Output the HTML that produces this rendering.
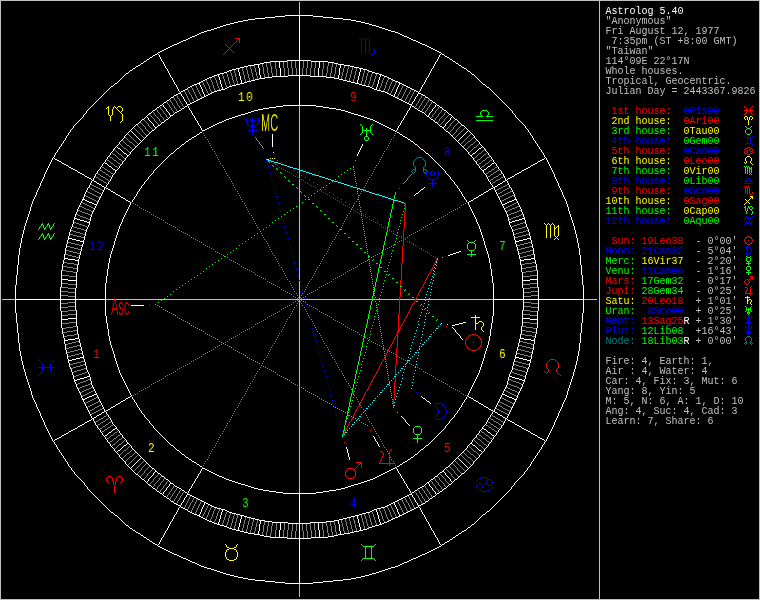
<!DOCTYPE html><html><head><meta charset="utf-8"><title>Astrolog 5.40</title><style>
html,body{margin:0;padding:0;background:#000;overflow:hidden}
#c{position:relative;width:760px;height:600px;background:#000;overflow:hidden}
svg{position:absolute;left:0;top:0}
.t{position:absolute;left:0;top:0;font-family:"Liberation Mono",monospace;font-size:10px;line-height:10px;white-space:pre;color:#c0c0c0;will-change:transform}
.t span{position:absolute;display:block;height:10px}
.hn{position:absolute;font-family:"Liberation Mono",monospace;font-size:13px;line-height:13px;letter-spacing:1.6px;white-space:pre;will-change:transform;transform:translateX(-50%) scaleX(0.85)}
.ob{position:absolute;font-family:"Liberation Sans",sans-serif;font-size:24px;line-height:24px;white-space:pre;transform-origin:0 0;transform:scaleX(0.46);will-change:transform;opacity:0.85}
.black{color:#000000}
.maroon{color:#800000}
.dkgreen{color:#008000}
.orange{color:#808000}
.dkblue{color:#000080}
.purple{color:#800080}
.dkcyan{color:#008080}
.ltgray{color:#c0c0c0}
.gray{color:#808080}
.red{color:#ff0000}
.green{color:#00ff00}
.yellow{color:#ffff00}
.blue{color:#0000ff}
.magenta{color:#ff00ff}
.cyan{color:#00ffff}
.white{color:#ffffff}
</style></head><body><div id="c">
<svg width="760" height="600" viewBox="0 0 760 600" shape-rendering="crispEdges" fill="none" stroke-width="1">
<path stroke="#008080" transform="translate(0,0.5)" d="M417 157h5M416 158h1M422 158h1M415 159h1M423 159h1M414 160h1M424 160h1M413 161h1M425 161h1M413 162h1M425 162h1M413 163h1M425 163h1M413 164h1M425 164h1M413 165h1M425 165h1M414 166h1M424 166h1M415 167h1M423 167h1M415 168h1M423 168h1M413 169h3M423 169h3M412 170h1M415 170h1M423 170h1M426 170h1M411 171h1M415 171h1M423 171h1M427 171h1M412 172h1M414 172h1M424 172h1M413 173h1M425 173h1M399 188h1M747 336h3M746 337h1M750 337h1M745 338h1M751 338h1M745 339h1M751 339h1M745 340h1M751 340h1M746 341h1M750 341h1M745 342h2M750 342h2M744 343h1M746 343h1M750 343h1M752 343h1M745 344h1M751 344h1"/>
<path stroke="#c0c0c0" transform="translate(0,0.5)" d="M0 0h760M0 1h1M599 1h1M759 1h1M0 2h1M299 2h1M599 2h1M759 2h1M0 3h1M299 3h1M599 3h1M759 3h1M0 4h1M299 4h1M599 4h1M759 4h1M0 5h1M299 5h1M599 5h1M759 5h1M0 6h1M299 6h1M599 6h1M759 6h1M0 7h1M299 7h1M599 7h1M759 7h1M0 8h1M299 8h1M599 8h1M759 8h1M0 9h1M299 9h1M599 9h1M759 9h1M0 10h1M299 10h1M599 10h1M759 10h1M0 11h1M299 11h1M599 11h1M759 11h1M0 12h1M299 12h1M599 12h1M759 12h1M0 13h1M299 13h1M599 13h1M759 13h1M0 14h1M299 14h1M599 14h1M759 14h1M0 15h1M599 15h1M759 15h1M0 16h1M599 16h1M759 16h1M0 17h1M599 17h1M759 17h1M0 18h1M599 18h1M759 18h1M0 19h1M599 19h1M759 19h1M0 20h1M599 20h1M759 20h1M0 21h1M599 21h1M759 21h1M0 22h1M599 22h1M759 22h1M0 23h1M599 23h1M759 23h1M0 24h1M599 24h1M759 24h1M0 25h1M599 25h1M759 25h1M0 26h1M599 26h1M759 26h1M0 27h1M599 27h1M759 27h1M0 28h1M599 28h1M759 28h1M0 29h1M599 29h1M759 29h1M0 30h1M599 30h1M759 30h1M0 31h1M599 31h1M759 31h1M0 32h1M599 32h1M759 32h1M0 33h1M599 33h1M759 33h1M0 34h1M599 34h1M759 34h1M0 35h1M599 35h1M759 35h1M0 36h1M599 36h1M759 36h1M0 37h1M599 37h1M759 37h1M0 38h1M599 38h1M759 38h1M0 39h1M599 39h1M759 39h1M0 40h1M599 40h1M759 40h1M0 41h1M599 41h1M759 41h1M0 42h1M599 42h1M759 42h1M0 43h1M599 43h1M759 43h1M0 44h1M599 44h1M759 44h1M0 45h1M599 45h1M759 45h1M0 46h1M599 46h1M759 46h1M0 47h1M599 47h1M759 47h1M0 48h1M599 48h1M759 48h1M0 49h1M599 49h1M759 49h1M0 50h1M599 50h1M759 50h1M0 51h1M599 51h1M759 51h1M0 52h1M599 52h1M759 52h1M0 53h1M599 53h1M759 53h1M0 54h1M599 54h1M759 54h1M0 55h1M599 55h1M759 55h1M0 56h1M599 56h1M759 56h1M0 57h1M599 57h1M759 57h1M0 58h1M599 58h1M759 58h1M0 59h1M599 59h1M759 59h1M0 60h1M599 60h1M759 60h1M0 61h1M599 61h1M759 61h1M0 62h1M599 62h1M759 62h1M0 63h1M599 63h1M759 63h1M0 64h1M599 64h1M759 64h1M0 65h1M599 65h1M759 65h1M0 66h1M599 66h1M759 66h1M0 67h1M599 67h1M759 67h1M0 68h1M599 68h1M759 68h1M0 69h1M599 69h1M759 69h1M0 70h1M599 70h1M759 70h1M0 71h1M599 71h1M759 71h1M0 72h1M599 72h1M759 72h1M0 73h1M599 73h1M759 73h1M0 74h1M599 74h1M759 74h1M0 75h1M599 75h1M759 75h1M0 76h1M599 76h1M759 76h1M0 77h1M599 77h1M759 77h1M0 78h1M599 78h1M759 78h1M0 79h1M599 79h1M759 79h1M0 80h1M599 80h1M759 80h1M0 81h1M599 81h1M759 81h1M0 82h1M599 82h1M759 82h1M0 83h1M599 83h1M759 83h1M0 84h1M599 84h1M759 84h1M0 85h1M599 85h1M759 85h1M0 86h1M599 86h1M759 86h1M0 87h1M599 87h1M759 87h1M0 88h1M599 88h1M759 88h1M0 89h1M599 89h1M759 89h1M0 90h1M599 90h1M759 90h1M0 91h1M599 91h1M759 91h1M0 92h1M599 92h1M759 92h1M0 93h1M599 93h1M759 93h1M0 94h1M599 94h1M759 94h1M0 95h1M599 95h1M759 95h1M0 96h1M599 96h1M759 96h1M0 97h1M599 97h1M759 97h1M0 98h1M599 98h1M759 98h1M0 99h1M599 99h1M759 99h1M0 100h1M599 100h1M759 100h1M0 101h1M599 101h1M759 101h1M0 102h1M599 102h1M759 102h1M0 103h1M599 103h1M759 103h1M0 104h1M599 104h1M759 104h1M0 105h1M599 105h1M759 105h1M0 106h1M299 106h1M599 106h1M759 106h1M0 107h1M299 107h1M599 107h1M759 107h1M0 108h1M299 108h1M599 108h1M759 108h1M0 109h1M299 109h1M599 109h1M759 109h1M0 110h1M299 110h1M599 110h1M759 110h1M0 111h1M299 111h1M599 111h1M759 111h1M0 112h1M299 112h1M599 112h1M759 112h1M0 113h1M299 113h1M599 113h1M759 113h1M0 114h1M299 114h1M599 114h1M759 114h1M0 115h1M299 115h1M599 115h1M759 115h1M0 116h1M299 116h1M599 116h1M759 116h1M0 117h1M299 117h1M599 117h1M759 117h1M0 118h1M299 118h1M599 118h1M759 118h1M0 119h1M299 119h1M599 119h1M759 119h1M0 120h1M299 120h1M599 120h1M759 120h1M0 121h1M299 121h1M599 121h1M759 121h1M0 122h1M299 122h1M599 122h1M759 122h1M0 123h1M299 123h1M599 123h1M759 123h1M0 124h1M299 124h1M599 124h1M759 124h1M0 125h1M299 125h1M599 125h1M759 125h1M0 126h1M299 126h1M599 126h1M759 126h1M0 127h1M299 127h1M599 127h1M759 127h1M0 128h1M299 128h1M599 128h1M759 128h1M0 129h1M299 129h1M599 129h1M759 129h1M0 130h1M299 130h1M599 130h1M759 130h1M0 131h1M299 131h1M599 131h1M759 131h1M0 132h1M299 132h1M599 132h1M759 132h1M0 133h1M299 133h1M599 133h1M759 133h1M0 134h1M299 134h1M599 134h1M759 134h1M0 135h1M299 135h1M599 135h1M759 135h1M0 136h1M299 136h1M599 136h1M759 136h1M0 137h1M299 137h1M599 137h1M759 137h1M0 138h1M299 138h1M599 138h1M759 138h1M0 139h1M299 139h1M599 139h1M759 139h1M0 140h1M299 140h1M599 140h1M759 140h1M0 141h1M299 141h1M599 141h1M759 141h1M0 142h1M299 142h1M599 142h1M759 142h1M0 143h1M299 143h1M599 143h1M759 143h1M0 144h1M299 144h1M599 144h1M759 144h1M0 145h1M299 145h1M599 145h1M759 145h1M0 146h1M299 146h1M599 146h1M759 146h1M0 147h1M299 147h1M599 147h1M759 147h1M0 148h1M299 148h1M599 148h1M759 148h1M0 149h1M299 149h1M599 149h1M759 149h1M0 150h1M299 150h1M599 150h1M759 150h1M0 151h1M299 151h1M599 151h1M759 151h1M0 152h1M299 152h1M599 152h1M759 152h1M0 153h1M299 153h1M599 153h1M759 153h1M0 154h1M299 154h1M599 154h1M759 154h1M0 155h1M299 155h1M599 155h1M759 155h1M0 156h1M299 156h1M599 156h1M759 156h1M0 157h1M299 157h1M599 157h1M759 157h1M0 158h1M299 158h1M599 158h1M759 158h1M0 159h1M299 159h1M599 159h1M759 159h1M0 160h1M299 160h1M599 160h1M759 160h1M0 161h1M299 161h1M599 161h1M759 161h1M0 162h1M299 162h1M599 162h1M759 162h1M0 163h1M299 163h1M599 163h1M759 163h1M0 164h1M299 164h1M599 164h1M759 164h1M0 165h1M299 165h1M599 165h1M759 165h1M0 166h1M299 166h1M599 166h1M759 166h1M0 167h1M299 167h1M599 167h1M759 167h1M0 168h1M299 168h1M599 168h1M759 168h1M0 169h1M599 169h1M759 169h1M0 170h1M299 170h1M599 170h1M759 170h1M0 171h1M299 171h1M599 171h1M759 171h1M0 172h1M299 172h1M599 172h1M759 172h1M0 173h1M299 173h1M599 173h1M759 173h1M0 174h1M299 174h1M599 174h1M759 174h1M0 175h1M299 175h1M599 175h1M759 175h1M0 176h1M299 176h1M599 176h1M759 176h1M0 177h1M299 177h1M599 177h1M759 177h1M0 178h1M599 178h1M759 178h1M0 179h1M299 179h1M599 179h1M759 179h1M0 180h1M299 180h1M599 180h1M759 180h1M0 181h1M299 181h1M599 181h1M759 181h1M0 182h1M299 182h1M599 182h1M759 182h1M0 183h1M299 183h1M599 183h1M759 183h1M0 184h1M299 184h1M599 184h1M759 184h1M0 185h1M299 185h1M599 185h1M759 185h1M0 186h1M299 186h1M599 186h1M759 186h1M0 187h1M299 187h1M599 187h1M759 187h1M0 188h1M299 188h1M599 188h1M759 188h1M0 189h1M299 189h1M599 189h1M759 189h1M0 190h1M299 190h1M599 190h1M759 190h1M0 191h1M299 191h1M599 191h1M759 191h1M0 192h1M299 192h1M599 192h1M759 192h1M0 193h1M299 193h1M599 193h1M759 193h1M0 194h1M299 194h1M599 194h1M759 194h1M0 195h1M299 195h1M599 195h1M759 195h1M0 196h1M299 196h1M599 196h1M759 196h1M0 197h1M299 197h1M599 197h1M759 197h1M0 198h1M299 198h1M599 198h1M759 198h1M0 199h1M299 199h1M599 199h1M759 199h1M0 200h1M299 200h1M599 200h1M759 200h1M0 201h1M299 201h1M599 201h1M759 201h1M0 202h1M299 202h1M599 202h1M759 202h1M0 203h1M299 203h1M599 203h1M759 203h1M0 204h1M599 204h1M759 204h1M0 205h1M299 205h1M599 205h1M759 205h1M0 206h1M299 206h1M599 206h1M759 206h1M0 207h1M299 207h1M599 207h1M759 207h1M0 208h1M299 208h1M599 208h1M759 208h1M0 209h1M299 209h1M599 209h1M759 209h1M0 210h1M299 210h1M599 210h1M759 210h1M0 211h1M299 211h1M599 211h1M759 211h1M0 212h1M299 212h1M599 212h1M759 212h1M0 213h1M299 213h1M599 213h1M759 213h1M0 214h1M299 214h1M599 214h1M759 214h1M0 215h1M299 215h1M599 215h1M759 215h1M0 216h1M299 216h1M599 216h1M759 216h1M0 217h1M299 217h1M599 217h1M759 217h1M0 218h1M299 218h1M599 218h1M759 218h1M0 219h1M299 219h1M599 219h1M759 219h1M0 220h1M299 220h1M599 220h1M759 220h1M0 221h1M299 221h1M599 221h1M759 221h1M0 222h1M299 222h1M599 222h1M759 222h1M0 223h1M299 223h1M599 223h1M759 223h1M0 224h1M299 224h1M599 224h1M759 224h1M0 225h1M299 225h1M599 225h1M759 225h1M0 226h1M299 226h1M599 226h1M759 226h1M0 227h1M299 227h1M599 227h1M759 227h1M0 228h1M299 228h1M599 228h1M759 228h1M0 229h1M299 229h1M599 229h1M759 229h1M0 230h1M299 230h1M599 230h1M759 230h1M0 231h1M299 231h1M599 231h1M759 231h1M0 232h1M299 232h1M599 232h1M759 232h1M0 233h1M299 233h1M599 233h1M759 233h1M0 234h1M299 234h1M599 234h1M759 234h1M0 235h1M299 235h1M599 235h1M759 235h1M0 236h1M299 236h1M599 236h1M759 236h1M0 237h1M299 237h1M599 237h1M759 237h1M0 238h1M299 238h1M599 238h1M759 238h1M0 239h1M299 239h1M599 239h1M759 239h1M0 240h1M299 240h1M599 240h1M759 240h1M0 241h1M299 241h1M599 241h1M759 241h1M0 242h1M299 242h1M599 242h1M759 242h1M0 243h1M299 243h1M599 243h1M759 243h1M0 244h1M299 244h1M599 244h1M759 244h1M0 245h1M299 245h1M599 245h1M759 245h1M0 246h1M299 246h1M599 246h1M759 246h1M0 247h1M299 247h1M599 247h1M759 247h1M0 248h1M299 248h1M599 248h1M759 248h1M0 249h1M299 249h1M599 249h1M759 249h1M0 250h1M299 250h1M599 250h1M759 250h1M0 251h1M299 251h1M599 251h1M759 251h1M0 252h1M299 252h1M599 252h1M759 252h1M0 253h1M299 253h1M599 253h1M759 253h1M0 254h1M299 254h1M599 254h1M759 254h1M0 255h1M299 255h1M599 255h1M759 255h1M0 256h1M299 256h1M599 256h1M759 256h1M0 257h1M299 257h1M599 257h1M759 257h1M0 258h1M299 258h1M599 258h1M759 258h1M0 259h1M299 259h1M599 259h1M759 259h1M0 260h1M299 260h1M599 260h1M759 260h1M0 261h1M299 261h1M599 261h1M759 261h1M0 262h1M299 262h1M599 262h1M759 262h1M0 263h1M299 263h1M599 263h1M759 263h1M0 264h1M299 264h1M599 264h1M759 264h1M0 265h1M299 265h1M599 265h1M759 265h1M0 266h1M299 266h1M599 266h1M759 266h1M0 267h1M299 267h1M599 267h1M759 267h1M0 268h1M299 268h1M599 268h1M759 268h1M0 269h1M299 269h1M599 269h1M759 269h1M0 270h1M299 270h1M599 270h1M759 270h1M0 271h1M299 271h1M599 271h1M759 271h1M0 272h1M299 272h1M599 272h1M759 272h1M0 273h1M299 273h1M599 273h1M759 273h1M0 274h1M299 274h1M599 274h1M759 274h1M0 275h1M299 275h1M599 275h1M759 275h1M0 276h1M299 276h1M599 276h1M759 276h1M0 277h1M299 277h1M599 277h1M759 277h1M0 278h1M299 278h1M599 278h1M759 278h1M0 279h1M299 279h1M599 279h1M759 279h1M0 280h1M599 280h1M759 280h1M0 281h1M299 281h1M599 281h1M759 281h1M0 282h1M299 282h1M599 282h1M759 282h1M0 283h1M299 283h1M599 283h1M759 283h1M0 284h1M299 284h1M599 284h1M759 284h1M0 285h1M299 285h1M599 285h1M759 285h1M0 286h1M299 286h1M599 286h1M759 286h1M0 287h1M299 287h1M599 287h1M759 287h1M0 288h1M299 288h1M599 288h1M759 288h1M0 289h1M299 289h1M599 289h1M759 289h1M0 290h1M299 290h1M599 290h1M759 290h1M0 291h1M299 291h1M599 291h1M759 291h1M0 292h1M299 292h1M599 292h1M759 292h1M0 293h1M299 293h1M599 293h1M759 293h1M0 294h1M299 294h1M599 294h1M759 294h1M0 295h1M299 295h1M599 295h1M759 295h1M0 296h1M299 296h1M599 296h1M759 296h1M0 297h1M299 297h1M599 297h1M759 297h1M0 298h1M299 298h1M599 298h1M759 298h1M0 299h1M2 299h13M106 299h193M300 299h72M373 299h2M376 299h23M400 299h15M416 299h77M584 299h13M599 299h1M759 299h1M0 300h1M299 300h1M599 300h1M759 300h1M0 301h1M299 301h1M599 301h1M759 301h1M0 302h1M299 302h1M599 302h1M759 302h1M0 303h1M299 303h1M599 303h1M759 303h1M0 304h1M299 304h1M599 304h1M759 304h1M0 305h1M299 305h1M599 305h1M759 305h1M0 306h1M299 306h1M599 306h1M759 306h1M0 307h1M299 307h1M599 307h1M759 307h1M0 308h1M299 308h1M599 308h1M759 308h1M0 309h1M299 309h1M599 309h1M759 309h1M0 310h1M299 310h1M599 310h1M759 310h1M0 311h1M299 311h1M599 311h1M759 311h1M0 312h1M299 312h1M599 312h1M759 312h1M0 313h1M299 313h1M599 313h1M759 313h1M0 314h1M299 314h1M599 314h1M759 314h1M0 315h1M299 315h1M599 315h1M759 315h1M0 316h1M299 316h1M599 316h1M759 316h1M0 317h1M299 317h1M599 317h1M759 317h1M0 318h1M299 318h1M599 318h1M759 318h1M0 319h1M299 319h1M599 319h1M759 319h1M0 320h1M299 320h1M599 320h1M759 320h1M0 321h1M299 321h1M599 321h1M759 321h1M0 322h1M299 322h1M599 322h1M759 322h1M0 323h1M299 323h1M599 323h1M759 323h1M0 324h1M299 324h1M599 324h1M759 324h1M0 325h1M299 325h1M599 325h1M759 325h1M0 326h1M299 326h1M599 326h1M759 326h1M0 327h1M299 327h1M599 327h1M759 327h1M0 328h1M299 328h1M599 328h1M759 328h1M0 329h1M299 329h1M599 329h1M759 329h1M0 330h1M299 330h1M599 330h1M759 330h1M0 331h1M299 331h1M599 331h1M759 331h1M0 332h1M299 332h1M599 332h1M759 332h1M0 333h1M299 333h1M599 333h1M759 333h1M0 334h1M299 334h1M599 334h1M759 334h1M0 335h1M299 335h1M599 335h1M759 335h1M0 336h1M299 336h1M599 336h1M759 336h1M0 337h1M299 337h1M599 337h1M759 337h1M0 338h1M299 338h1M599 338h1M759 338h1M0 339h1M299 339h1M599 339h1M759 339h1M0 340h1M299 340h1M599 340h1M759 340h1M0 341h1M299 341h1M599 341h1M759 341h1M0 342h1M299 342h1M599 342h1M759 342h1M0 343h1M299 343h1M599 343h1M759 343h1M0 344h1M299 344h1M599 344h1M759 344h1M0 345h1M299 345h1M599 345h1M759 345h1M0 346h1M299 346h1M599 346h1M759 346h1M0 347h1M299 347h1M599 347h1M759 347h1M0 348h1M299 348h1M599 348h1M759 348h1M0 349h1M299 349h1M599 349h1M759 349h1M0 350h1M299 350h1M599 350h1M759 350h1M0 351h1M299 351h1M599 351h1M759 351h1M0 352h1M299 352h1M599 352h1M759 352h1M0 353h1M299 353h1M599 353h1M759 353h1M0 354h1M299 354h1M599 354h1M759 354h1M0 355h1M299 355h1M599 355h1M759 355h1M0 356h1M299 356h1M599 356h1M759 356h1M0 357h1M299 357h1M599 357h1M759 357h1M0 358h1M299 358h1M599 358h1M759 358h1M0 359h1M299 359h1M599 359h1M759 359h1M0 360h1M299 360h1M599 360h1M759 360h1M0 361h1M299 361h1M599 361h1M759 361h1M0 362h1M299 362h1M599 362h1M759 362h1M0 363h1M299 363h1M599 363h1M759 363h1M0 364h1M299 364h1M599 364h1M759 364h1M0 365h1M299 365h1M599 365h1M759 365h1M0 366h1M299 366h1M599 366h1M759 366h1M0 367h1M299 367h1M599 367h1M759 367h1M0 368h1M299 368h1M599 368h1M759 368h1M0 369h1M299 369h1M599 369h1M759 369h1M0 370h1M299 370h1M599 370h1M759 370h1M0 371h1M299 371h1M599 371h1M759 371h1M0 372h1M299 372h1M599 372h1M759 372h1M0 373h1M299 373h1M599 373h1M759 373h1M0 374h1M299 374h1M599 374h1M759 374h1M0 375h1M299 375h1M599 375h1M759 375h1M0 376h1M299 376h1M599 376h1M759 376h1M0 377h1M299 377h1M599 377h1M759 377h1M0 378h1M299 378h1M599 378h1M759 378h1M0 379h1M299 379h1M599 379h1M759 379h1M0 380h1M299 380h1M599 380h1M759 380h1M0 381h1M299 381h1M599 381h1M759 381h1M0 382h1M299 382h1M599 382h1M759 382h1M0 383h1M299 383h1M599 383h1M759 383h1M0 384h1M299 384h1M599 384h1M759 384h1M0 385h1M299 385h1M599 385h1M759 385h1M0 386h1M599 386h1M759 386h1M0 387h1M299 387h1M599 387h1M759 387h1M0 388h1M299 388h1M599 388h1M759 388h1M0 389h1M299 389h1M599 389h1M759 389h1M0 390h1M299 390h1M599 390h1M759 390h1M0 391h1M299 391h1M599 391h1M759 391h1M0 392h1M299 392h1M599 392h1M759 392h1M0 393h1M299 393h1M599 393h1M759 393h1M0 394h1M299 394h1M599 394h1M759 394h1M0 395h1M299 395h1M599 395h1M759 395h1M0 396h1M299 396h1M599 396h1M759 396h1M0 397h1M299 397h1M599 397h1M759 397h1M0 398h1M299 398h1M599 398h1M759 398h1M0 399h1M299 399h1M599 399h1M759 399h1M0 400h1M299 400h1M599 400h1M759 400h1M0 401h1M299 401h1M599 401h1M759 401h1M0 402h1M299 402h1M599 402h1M759 402h1M0 403h1M299 403h1M599 403h1M759 403h1M0 404h1M299 404h1M599 404h1M759 404h1M0 405h1M299 405h1M599 405h1M759 405h1M0 406h1M299 406h1M599 406h1M759 406h1M0 407h1M299 407h1M599 407h1M759 407h1M0 408h1M299 408h1M599 408h1M759 408h1M0 409h1M299 409h1M599 409h1M759 409h1M0 410h1M299 410h1M599 410h1M759 410h1M0 411h1M299 411h1M599 411h1M759 411h1M0 412h1M299 412h1M599 412h1M759 412h1M0 413h1M299 413h1M599 413h1M759 413h1M0 414h1M299 414h1M599 414h1M759 414h1M0 415h1M299 415h1M599 415h1M759 415h1M0 416h1M299 416h1M599 416h1M759 416h1M0 417h1M299 417h1M599 417h1M759 417h1M0 418h1M299 418h1M599 418h1M759 418h1M0 419h1M299 419h1M599 419h1M759 419h1M0 420h1M299 420h1M599 420h1M759 420h1M0 421h1M299 421h1M599 421h1M759 421h1M0 422h1M299 422h1M599 422h1M759 422h1M0 423h1M299 423h1M599 423h1M759 423h1M0 424h1M299 424h1M599 424h1M759 424h1M0 425h1M299 425h1M599 425h1M759 425h1M0 426h1M299 426h1M599 426h1M759 426h1M0 427h1M299 427h1M599 427h1M759 427h1M0 428h1M299 428h1M599 428h1M759 428h1M0 429h1M299 429h1M599 429h1M759 429h1M0 430h1M299 430h1M599 430h1M759 430h1M0 431h1M299 431h1M599 431h1M759 431h1M0 432h1M299 432h1M599 432h1M759 432h1M0 433h1M299 433h1M599 433h1M759 433h1M0 434h1M299 434h1M599 434h1M759 434h1M0 435h1M299 435h1M599 435h1M759 435h1M0 436h1M299 436h1M599 436h1M759 436h1M0 437h1M299 437h1M599 437h1M759 437h1M0 438h1M299 438h1M599 438h1M759 438h1M0 439h1M299 439h1M599 439h1M759 439h1M0 440h1M299 440h1M599 440h1M759 440h1M0 441h1M299 441h1M599 441h1M759 441h1M0 442h1M299 442h1M599 442h1M759 442h1M0 443h1M299 443h1M599 443h1M759 443h1M0 444h1M299 444h1M599 444h1M759 444h1M0 445h1M299 445h1M599 445h1M759 445h1M0 446h1M299 446h1M599 446h1M759 446h1M0 447h1M299 447h1M599 447h1M759 447h1M0 448h1M299 448h1M599 448h1M759 448h1M0 449h1M299 449h1M599 449h1M759 449h1M0 450h1M299 450h1M599 450h1M759 450h1M0 451h1M299 451h1M599 451h1M759 451h1M0 452h1M299 452h1M599 452h1M759 452h1M0 453h1M299 453h1M599 453h1M759 453h1M0 454h1M299 454h1M599 454h1M759 454h1M0 455h1M299 455h1M599 455h1M759 455h1M0 456h1M299 456h1M599 456h1M759 456h1M0 457h1M299 457h1M599 457h1M759 457h1M0 458h1M299 458h1M599 458h1M759 458h1M0 459h1M299 459h1M599 459h1M759 459h1M0 460h1M299 460h1M599 460h1M759 460h1M0 461h1M299 461h1M599 461h1M759 461h1M0 462h1M299 462h1M599 462h1M759 462h1M0 463h1M299 463h1M599 463h1M759 463h1M0 464h1M299 464h1M599 464h1M759 464h1M0 465h1M299 465h1M599 465h1M759 465h1M0 466h1M299 466h1M599 466h1M759 466h1M0 467h1M299 467h1M599 467h1M759 467h1M0 468h1M299 468h1M599 468h1M759 468h1M0 469h1M299 469h1M599 469h1M759 469h1M0 470h1M299 470h1M599 470h1M759 470h1M0 471h1M299 471h1M599 471h1M759 471h1M0 472h1M299 472h1M599 472h1M759 472h1M0 473h1M299 473h1M599 473h1M759 473h1M0 474h1M299 474h1M599 474h1M759 474h1M0 475h1M299 475h1M599 475h1M759 475h1M0 476h1M299 476h1M599 476h1M759 476h1M0 477h1M299 477h1M599 477h1M759 477h1M0 478h1M299 478h1M599 478h1M759 478h1M0 479h1M299 479h1M599 479h1M759 479h1M0 480h1M299 480h1M599 480h1M759 480h1M0 481h1M299 481h1M599 481h1M759 481h1M0 482h1M299 482h1M599 482h1M759 482h1M0 483h1M299 483h1M599 483h1M759 483h1M0 484h1M299 484h1M599 484h1M759 484h1M0 485h1M299 485h1M599 485h1M759 485h1M0 486h1M299 486h1M599 486h1M759 486h1M0 487h1M299 487h1M599 487h1M759 487h1M0 488h1M299 488h1M599 488h1M759 488h1M0 489h1M299 489h1M599 489h1M759 489h1M0 490h1M299 490h1M599 490h1M759 490h1M0 491h1M299 491h1M599 491h1M759 491h1M0 492h1M299 492h1M599 492h1M759 492h1M0 493h1M599 493h1M759 493h1M0 494h1M599 494h1M759 494h1M0 495h1M599 495h1M759 495h1M0 496h1M599 496h1M759 496h1M0 497h1M599 497h1M759 497h1M0 498h1M599 498h1M759 498h1M0 499h1M599 499h1M759 499h1M0 500h1M599 500h1M759 500h1M0 501h1M599 501h1M759 501h1M0 502h1M599 502h1M759 502h1M0 503h1M599 503h1M759 503h1M0 504h1M599 504h1M759 504h1M0 505h1M599 505h1M759 505h1M0 506h1M599 506h1M759 506h1M0 507h1M599 507h1M759 507h1M0 508h1M599 508h1M759 508h1M0 509h1M599 509h1M759 509h1M0 510h1M599 510h1M759 510h1M0 511h1M599 511h1M759 511h1M0 512h1M599 512h1M759 512h1M0 513h1M599 513h1M759 513h1M0 514h1M599 514h1M759 514h1M0 515h1M599 515h1M759 515h1M0 516h1M599 516h1M759 516h1M0 517h1M599 517h1M759 517h1M0 518h1M599 518h1M759 518h1M0 519h1M599 519h1M759 519h1M0 520h1M599 520h1M759 520h1M0 521h1M599 521h1M759 521h1M0 522h1M599 522h1M759 522h1M0 523h1M599 523h1M759 523h1M0 524h1M599 524h1M759 524h1M0 525h1M599 525h1M759 525h1M0 526h1M599 526h1M759 526h1M0 527h1M599 527h1M759 527h1M0 528h1M599 528h1M759 528h1M0 529h1M599 529h1M759 529h1M0 530h1M599 530h1M759 530h1M0 531h1M599 531h1M759 531h1M0 532h1M599 532h1M759 532h1M0 533h1M599 533h1M759 533h1M0 534h1M599 534h1M759 534h1M0 535h1M599 535h1M759 535h1M0 536h1M599 536h1M759 536h1M0 537h1M599 537h1M759 537h1M0 538h1M599 538h1M759 538h1M0 539h1M599 539h1M759 539h1M0 540h1M599 540h1M759 540h1M0 541h1M599 541h1M759 541h1M0 542h1M599 542h1M759 542h1M0 543h1M599 543h1M759 543h1M0 544h1M599 544h1M759 544h1M0 545h1M599 545h1M759 545h1M0 546h1M599 546h1M759 546h1M0 547h1M599 547h1M759 547h1M0 548h1M599 548h1M759 548h1M0 549h1M599 549h1M759 549h1M0 550h1M599 550h1M759 550h1M0 551h1M599 551h1M759 551h1M0 552h1M599 552h1M759 552h1M0 553h1M599 553h1M759 553h1M0 554h1M599 554h1M759 554h1M0 555h1M599 555h1M759 555h1M0 556h1M599 556h1M759 556h1M0 557h1M599 557h1M759 557h1M0 558h1M599 558h1M759 558h1M0 559h1M599 559h1M759 559h1M0 560h1M599 560h1M759 560h1M0 561h1M599 561h1M759 561h1M0 562h1M599 562h1M759 562h1M0 563h1M599 563h1M759 563h1M0 564h1M599 564h1M759 564h1M0 565h1M599 565h1M759 565h1M0 566h1M599 566h1M759 566h1M0 567h1M599 567h1M759 567h1M0 568h1M599 568h1M759 568h1M0 569h1M599 569h1M759 569h1M0 570h1M599 570h1M759 570h1M0 571h1M599 571h1M759 571h1M0 572h1M599 572h1M759 572h1M0 573h1M599 573h1M759 573h1M0 574h1M599 574h1M759 574h1M0 575h1M599 575h1M759 575h1M0 576h1M599 576h1M759 576h1M0 577h1M599 577h1M759 577h1M0 578h1M599 578h1M759 578h1M0 579h1M599 579h1M759 579h1M0 580h1M599 580h1M759 580h1M0 581h1M599 581h1M759 581h1M0 582h1M599 582h1M759 582h1M0 583h1M599 583h1M759 583h1M0 584h1M299 584h1M599 584h1M759 584h1M0 585h1M299 585h1M599 585h1M759 585h1M0 586h1M299 586h1M599 586h1M759 586h1M0 587h1M299 587h1M599 587h1M759 587h1M0 588h1M299 588h1M599 588h1M759 588h1M0 589h1M299 589h1M599 589h1M759 589h1M0 590h1M299 590h1M599 590h1M759 590h1M0 591h1M299 591h1M599 591h1M759 591h1M0 592h1M299 592h1M599 592h1M759 592h1M0 593h1M299 593h1M599 593h1M759 593h1M0 594h1M299 594h1M599 594h1M759 594h1M0 595h1M299 595h1M599 595h1M759 595h1M0 596h1M299 596h1M599 596h1M759 596h1M0 597h1M599 597h1M759 597h1M0 598h1M599 598h1M759 598h1M0 599h760"/>
<path stroke="#808080" transform="translate(0,0.5)" d="M287 61h1M291 61h1M295 61h1M303 61h1M307 61h1M270 62h1M275 62h1M283 62h1M287 62h1M291 62h1M295 62h1M303 62h1M307 62h1M311 62h1M315 62h1M323 62h1M266 63h1M270 63h1M275 63h1M283 63h1M287 63h1M291 63h1M295 63h1M303 63h1M307 63h1M311 63h1M315 63h1M323 63h1M328 63h1M332 63h1M262 64h1M266 64h1M270 64h1M275 64h1M283 64h1M287 64h1M291 64h1M295 64h1M303 64h1M307 64h1M311 64h1M315 64h1M323 64h1M328 64h1M332 64h1M336 64h1M254 65h1M262 65h1M266 65h1M270 65h1M275 65h1M283 65h1M287 65h1M291 65h1M295 65h1M303 65h1M307 65h1M311 65h1M315 65h1M323 65h1M328 65h1M332 65h1M336 65h1M250 66h1M254 66h1M262 66h1M266 66h1M271 66h1M275 66h1M283 66h1M287 66h1M291 66h1M295 66h1M303 66h1M307 66h1M311 66h1M315 66h1M323 66h1M327 66h1M332 66h1M336 66h1M344 66h1M348 66h1M246 67h1M250 67h1M254 67h1M263 67h1M267 67h1M271 67h1M275 67h1M283 67h1M287 67h1M291 67h1M295 67h1M303 67h1M307 67h1M311 67h1M315 67h1M323 67h1M327 67h1M331 67h1M335 67h1M344 67h1M348 67h1M352 67h1M242 68h1M246 68h1M250 68h1M255 68h1M263 68h1M267 68h1M271 68h1M275 68h1M284 68h1M288 68h1M292 68h1M296 68h1M302 68h1M306 68h1M310 68h1M314 68h1M323 68h1M327 68h1M331 68h1M335 68h1M343 68h1M348 68h1M352 68h1M356 68h1M242 69h1M246 69h1M251 69h1M255 69h1M263 69h1M267 69h1M271 69h1M276 69h1M284 69h1M288 69h1M292 69h1M296 69h1M302 69h1M306 69h1M310 69h1M314 69h1M322 69h1M327 69h1M331 69h1M335 69h1M343 69h1M347 69h1M352 69h1M356 69h1M234 70h1M242 70h1M247 70h1M251 70h1M255 70h1M263 70h1M267 70h1M271 70h1M276 70h1M284 70h1M288 70h1M292 70h1M296 70h1M302 70h1M306 70h1M310 70h1M314 70h1M322 70h1M327 70h1M331 70h1M335 70h1M343 70h1M347 70h1M351 70h1M356 70h1M364 70h1M230 71h1M234 71h1M243 71h1M247 71h1M251 71h1M255 71h1M263 71h1M267 71h1M271 71h1M276 71h1M284 71h1M288 71h1M292 71h1M296 71h1M302 71h1M306 71h1M310 71h1M314 71h1M322 71h1M327 71h1M331 71h1M335 71h1M343 71h1M347 71h1M351 71h1M355 71h1M364 71h1M368 71h1M230 72h1M234 72h1M243 72h1M247 72h1M251 72h1M256 72h1M263 72h1M267 72h1M271 72h1M276 72h1M284 72h1M288 72h1M292 72h1M296 72h1M302 72h1M306 72h1M310 72h1M314 72h1M322 72h1M327 72h1M331 72h1M335 72h1M342 72h1M347 72h1M351 72h1M355 72h1M364 72h1M368 72h1M226 73h1M231 73h1M235 73h1M243 73h1M247 73h1M252 73h1M256 73h1M263 73h1M268 73h1M272 73h1M276 73h1M284 73h1M288 73h1M292 73h1M296 73h1M302 73h1M306 73h1M310 73h1M314 73h1M322 73h1M326 73h1M330 73h1M335 73h1M342 73h1M346 73h1M351 73h1M355 73h1M363 73h1M367 73h1M372 73h1M222 74h1M227 74h1M231 74h1M235 74h1M243 74h1M248 74h1M252 74h1M256 74h1M264 74h1M268 74h1M272 74h1M276 74h1M284 74h1M288 74h1M292 74h1M296 74h1M302 74h1M306 74h1M310 74h1M314 74h1M322 74h1M326 74h1M330 74h1M334 74h1M342 74h1M346 74h1M350 74h1M355 74h1M363 74h1M367 74h1M371 74h1M376 74h1M222 75h1M227 75h1M231 75h1M235 75h1M244 75h1M248 75h1M252 75h1M256 75h1M264 75h1M268 75h1M272 75h1M276 75h1M284 75h1M310 75h1M314 75h1M322 75h1M326 75h1M330 75h1M334 75h1M342 75h1M346 75h1M350 75h1M354 75h1M363 75h1M367 75h1M371 75h1M376 75h1M214 76h1M223 76h1M227 76h1M232 76h1M235 76h1M244 76h1M248 76h1M252 76h1M257 76h1M264 76h1M268 76h1M326 76h1M330 76h1M334 76h1M341 76h1M346 76h1M350 76h1M354 76h1M363 76h1M366 76h1M371 76h1M375 76h1M214 77h1M223 77h1M228 77h1M232 77h1M236 77h1M244 77h1M248 77h1M253 77h1M257 77h1M264 77h1M334 77h1M341 77h1M345 77h1M350 77h1M354 77h1M362 77h1M366 77h1M370 77h1M375 77h1M384 77h1M210 78h1M215 78h1M223 78h1M228 78h1M232 78h1M236 78h1M244 78h1M249 78h1M253 78h1M257 78h1M341 78h1M345 78h1M349 78h1M354 78h1M362 78h1M366 78h1M370 78h1M375 78h1M383 78h1M388 78h1M210 79h1M215 79h1M224 79h1M228 79h1M232 79h1M236 79h1M245 79h1M249 79h1M253 79h1M345 79h1M349 79h1M353 79h1M362 79h1M366 79h1M370 79h1M374 79h1M383 79h1M388 79h1M206 80h1M211 80h1M216 80h1M224 80h1M228 80h1M233 80h1M236 80h1M245 80h1M249 80h1M349 80h1M353 80h1M362 80h1M365 80h1M370 80h1M374 80h1M382 80h1M387 80h1M392 80h1M206 81h1M211 81h1M216 81h1M224 81h1M229 81h1M233 81h1M237 81h1M245 81h1M353 81h1M361 81h1M365 81h1M369 81h1M374 81h1M382 81h1M387 81h1M392 81h1M202 82h1M207 82h1M212 82h1M216 82h1M225 82h1M229 82h1M233 82h1M237 82h1M361 82h1M365 82h1M369 82h1M373 82h1M382 82h1M386 82h1M391 82h1M396 82h1M203 83h1M207 83h1M212 83h1M217 83h1M225 83h1M229 83h1M234 83h1M237 83h1M361 83h1M364 83h1M369 83h1M373 83h1M381 83h1M386 83h1M391 83h1M395 83h1M203 84h1M208 84h1M212 84h1M217 84h1M225 84h1M230 84h1M234 84h1M364 84h1M368 84h1M373 84h1M381 84h1M386 84h1M390 84h1M395 84h1M195 85h1M204 85h1M208 85h1M213 85h1M217 85h1M226 85h1M230 85h1M368 85h1M372 85h1M381 85h1M385 85h1M390 85h1M394 85h1M403 85h1M196 86h1M204 86h1M209 86h1M213 86h1M218 86h1M226 86h1M372 86h1M380 86h1M385 86h1M389 86h1M394 86h1M402 86h1M191 87h1M196 87h1M205 87h1M209 87h1M213 87h1M218 87h1M380 87h1M385 87h1M389 87h1M393 87h1M402 87h1M407 87h1M192 88h1M197 88h1M205 88h1M209 88h1M214 88h1M219 88h1M379 88h1M384 88h1M389 88h1M393 88h1M401 88h1M406 88h1M187 89h1M192 89h1M197 89h1M206 89h1M210 89h1M214 89h1M219 89h1M379 89h1M384 89h1M388 89h1M392 89h1M401 89h1M406 89h1M411 89h1M188 90h1M193 90h1M198 90h1M206 90h1M210 90h1M215 90h1M383 90h1M388 90h1M392 90h1M400 90h1M405 90h1M410 90h1M184 91h1M188 91h1M193 91h1M198 91h1M207 91h1M211 91h1M387 91h1M391 91h1M400 91h1M405 91h1M410 91h1M414 91h1M185 92h1M189 92h1M194 92h1M199 92h1M207 92h1M211 92h1M387 92h1M391 92h1M399 92h1M404 92h1M409 92h1M413 92h1M185 93h1M189 93h1M194 93h1M199 93h1M208 93h1M390 93h1M399 93h1M404 93h1M409 93h1M413 93h1M186 94h1M190 94h1M195 94h1M200 94h1M398 94h1M403 94h1M408 94h1M412 94h1M176 95h1M186 95h1M191 95h1M195 95h1M200 95h1M398 95h1M403 95h1M407 95h1M412 95h1M422 95h1M177 96h1M187 96h1M191 96h1M196 96h1M201 96h1M397 96h1M402 96h1M407 96h1M411 96h1M421 96h1M173 97h1M177 97h1M187 97h1M192 97h1M196 97h1M201 97h1M397 97h1M402 97h1M406 97h1M411 97h1M421 97h1M425 97h1M174 98h1M178 98h1M188 98h1M192 98h1M197 98h1M401 98h1M406 98h1M410 98h1M420 98h1M424 98h1M174 99h1M179 99h1M188 99h1M193 99h1M197 99h1M401 99h1M405 99h1M410 99h1M419 99h1M424 99h1M170 100h1M175 100h1M179 100h1M189 100h1M193 100h1M405 100h1M409 100h1M419 100h1M423 100h1M428 100h1M170 101h1M176 101h1M180 101h1M189 101h1M409 101h1M418 101h1M422 101h1M428 101h1M167 102h1M171 102h1M176 102h1M180 102h1M190 102h1M408 102h1M418 102h1M422 102h1M427 102h1M431 102h1M167 103h1M172 103h1M177 103h1M181 103h1M417 103h1M421 103h1M426 103h1M431 103h1M168 104h1M172 104h1M177 104h1M182 104h1M416 104h1M421 104h1M426 104h1M430 104h1M169 105h1M173 105h1M178 105h1M182 105h1M416 105h1M420 105h1M425 105h1M429 105h1M169 106h1M174 106h1M179 106h1M183 106h1M415 106h1M419 106h1M424 106h1M429 106h1M160 107h1M170 107h1M174 107h1M179 107h1M419 107h1M424 107h1M428 107h1M438 107h1M160 108h1M171 108h1M175 108h1M180 108h1M418 108h1M423 108h1M427 108h1M438 108h1M156 109h1M161 109h1M171 109h1M176 109h1M422 109h1M427 109h1M437 109h1M442 109h1M157 110h1M162 110h1M172 110h1M176 110h1M422 110h1M426 110h1M436 110h1M441 110h1M157 111h1M163 111h1M173 111h1M425 111h1M435 111h1M441 111h1M153 112h1M158 112h1M163 112h1M173 112h1M425 112h1M435 112h1M440 112h1M445 112h1M154 113h1M159 113h1M164 113h1M434 113h1M439 113h1M444 113h1M149 114h1M154 114h1M160 114h1M165 114h1M433 114h1M438 114h1M444 114h1M150 115h1M155 115h1M160 115h1M166 115h1M432 115h1M438 115h1M443 115h1M448 115h1M151 116h1M156 116h1M161 116h1M166 116h1M432 116h1M437 116h1M442 116h1M447 116h1M152 117h1M157 117h1M162 117h1M167 117h1M431 117h1M436 117h1M441 117h1M446 117h1M153 118h1M158 118h1M163 118h1M435 118h1M440 118h1M445 118h1M154 119h1M159 119h1M163 119h1M435 119h1M439 119h1M444 119h1M144 120h1M154 120h1M159 120h1M164 120h1M434 120h1M439 120h1M444 120h1M454 120h1M145 121h1M155 121h1M160 121h1M438 121h1M443 121h1M453 121h1M140 122h1M146 122h1M156 122h1M161 122h1M437 122h1M442 122h1M452 122h1M458 122h1M141 123h1M147 123h1M157 123h1M441 123h1M451 123h1M457 123h1M142 124h1M148 124h1M158 124h1M440 124h1M450 124h1M456 124h1M137 125h1M143 125h1M148 125h1M450 125h1M455 125h1M461 125h1M138 126h1M144 126h1M149 126h1M449 126h1M454 126h1M460 126h1M139 127h1M145 127h1M150 127h1M448 127h1M453 127h1M459 127h1M134 128h1M140 128h1M145 128h1M151 128h1M447 128h1M453 128h1M458 128h1M464 128h1M135 129h1M141 129h1M146 129h1M152 129h1M446 129h1M452 129h1M457 129h1M463 129h1M136 130h1M142 130h1M147 130h1M451 130h1M456 130h1M462 130h1M137 131h1M142 131h1M148 131h1M202 131h1M396 131h1M450 131h1M456 131h1M461 131h1M138 132h1M143 132h1M149 132h1M449 132h1M455 132h1M460 132h1M139 133h1M144 133h1M203 133h1M395 133h1M454 133h1M459 133h1M128 134h1M140 134h1M145 134h1M453 134h1M458 134h1M470 134h1M129 135h1M141 135h1M146 135h1M204 135h1M394 135h1M452 135h1M457 135h1M469 135h1M130 136h1M142 136h1M456 136h1M468 136h1M125 137h1M131 137h1M143 137h1M205 137h1M255 137h1M393 137h1M455 137h1M467 137h1M473 137h1M126 138h1M132 138h1M256 138h1M466 138h1M472 138h1M127 139h1M133 139h1M207 139h1M256 139h1M391 139h1M465 139h1M471 139h1M122 140h1M128 140h1M134 140h1M257 140h1M464 140h1M470 140h1M476 140h1M123 141h1M129 141h1M135 141h1M208 141h1M258 141h1M390 141h1M463 141h1M468 141h2M475 141h1M124 142h1M130 142h2M136 142h1M259 142h1M462 142h1M467 142h1M474 142h1M125 143h1M132 143h1M137 143h1M209 143h1M259 143h1M389 143h1M461 143h1M466 143h1M473 143h1M120 144h1M126 144h1M133 144h1M260 144h1M465 144h1M471 144h2M478 144h1M121 145h1M127 145h2M134 145h1M210 145h1M261 145h1M388 145h1M464 145h1M470 145h1M477 145h1M122 146h1M129 146h1M135 146h1M262 146h1M463 146h1M469 146h1M476 146h1M123 147h1M130 147h1M211 147h1M262 147h1M387 147h1M468 147h1M474 147h2M124 148h2M131 148h1M263 148h1M467 148h1M473 148h1M114 149h1M126 149h1M132 149h1M212 149h1M386 149h1M466 149h1M472 149h1M484 149h1M115 150h1M127 150h1M471 150h1M483 150h1M116 151h1M128 151h1M214 151h1M384 151h1M470 151h1M482 151h1M117 152h1M129 152h1M469 152h1M481 152h1M112 153h1M118 153h1M215 153h1M383 153h1M479 153h2M486 153h1M113 154h2M119 154h2M478 154h1M484 154h2M115 155h1M121 155h1M216 155h1M382 155h1M477 155h1M483 155h1M109 156h1M116 156h1M122 156h1M476 156h1M482 156h1M489 156h1M110 157h2M117 157h1M123 157h1M217 157h1M381 157h1M475 157h1M481 157h1M487 157h2M112 158h1M118 158h1M124 158h1M474 158h1M480 158h1M486 158h1M113 159h1M119 159h2M218 159h1M380 159h1M478 159h2M485 159h1M107 160h2M114 160h2M121 160h1M477 160h1M483 160h2M490 160h2M109 161h1M116 161h1M122 161h1M219 161h1M379 161h1M476 161h1M482 161h1M489 161h1M110 162h1M117 162h1M481 162h1M488 162h1M111 163h2M118 163h2M220 163h1M378 163h1M479 163h2M486 163h2M113 164h1M120 164h1M478 164h1M485 164h1M114 165h1M222 165h1M376 165h1M484 165h1M115 166h2M482 166h2M102 167h2M117 167h1M223 167h1M375 167h1M481 167h1M495 167h2M104 168h1M494 168h1M105 169h2M224 169h1M374 169h1M492 169h2M100 170h2M107 170h1M491 170h1M497 170h2M102 171h1M108 171h2M225 171h1M373 171h1M489 171h2M496 171h1M103 172h2M110 172h1M488 172h1M494 172h2M97 173h1M105 173h1M111 173h2M226 173h1M372 173h1M486 173h2M493 173h1M501 173h1M98 174h2M106 174h2M411 174h1M491 174h2M499 174h2M100 175h1M108 175h1M227 175h1M371 175h1M410 175h1M490 175h1M498 175h1M95 176h1M101 176h2M109 176h2M409 176h1M488 176h2M496 176h2M503 176h1M96 177h2M103 177h2M229 177h1M369 177h1M408 177h1M494 177h2M501 177h2M98 178h1M105 178h1M407 178h1M493 178h1M500 178h1M99 179h2M106 179h2M230 179h1M368 179h1M407 179h1M491 179h2M498 179h2M101 180h2M108 180h1M406 180h1M490 180h1M496 180h2M103 181h1M231 181h1M367 181h1M405 181h1M495 181h1M104 182h2M404 182h1M493 182h2M106 183h1M232 183h1M366 183h1M403 183h1M492 183h1M91 184h1M507 184h1M92 185h2M233 185h1M365 185h1M505 185h2M94 186h2M503 186h2M89 187h1M96 187h2M234 187h1M364 187h1M501 187h2M509 187h1M90 188h2M98 188h2M499 188h2M507 188h2M92 189h2M100 189h2M235 189h1M363 189h1M497 189h2M505 189h2M94 190h1M102 190h1M496 190h1M503 190h2M87 191h1M95 191h2M237 191h1M361 191h1M502 191h1M510 191h2M88 192h2M97 192h2M500 192h2M508 192h2M90 193h2M99 193h2M238 193h1M360 193h1M498 193h2M506 193h2M92 194h2M504 194h2M85 195h1M94 195h2M239 195h1M359 195h1M502 195h2M512 195h2M86 196h2M96 196h2M500 196h2M510 196h2M88 197h2M98 197h2M240 197h1M499 197h1M508 197h2M90 198h2M506 198h2M92 199h2M241 199h1M357 199h1M504 199h2M94 200h2M502 200h2M96 201h2M242 201h1M356 201h1M501 201h1M82 202h1M131 202h1M467 202h1M516 202h1M83 203h2M133 203h1M244 203h1M354 203h1M465 203h1M514 203h2M85 204h2M135 204h1M463 204h1M512 204h2M87 205h2M137 205h1M245 205h1M353 205h1M461 205h1M510 205h2M80 206h2M89 206h2M508 206h2M517 206h2M82 207h2M91 207h2M139 207h1M246 207h1M352 207h1M459 207h1M506 207h2M515 207h2M84 208h2M93 208h1M141 208h1M457 208h1M505 208h1M512 208h3M86 209h3M143 209h1M247 209h1M351 209h1M455 209h1M510 209h2M78 210h2M89 210h2M145 210h1M453 210h1M508 210h2M519 210h2M80 211h2M91 211h2M147 211h1M248 211h1M350 211h1M451 211h1M506 211h2M517 211h2M82 212h3M149 212h1M449 212h1M514 212h3M85 213h3M249 213h1M349 213h1M511 213h3M76 214h2M88 214h2M151 214h1M447 214h1M509 214h2M521 214h2M78 215h2M90 215h1M153 215h1M251 215h1M347 215h1M445 215h1M508 215h1M519 215h2M80 216h3M155 216h1M443 216h1M516 216h3M83 217h3M157 217h1M252 217h1M346 217h1M441 217h1M513 217h3M86 218h2M159 218h1M439 218h1M511 218h2M88 219h2M161 219h1M253 219h1M345 219h1M437 219h1M509 219h2M163 220h1M435 220h1M254 221h1M344 221h1M74 222h2M165 222h1M433 222h1M523 222h2M76 223h3M167 223h1M255 223h1M343 223h1M431 223h1M520 223h3M79 224h3M169 224h1M429 224h1M517 224h3M82 225h3M171 225h1M256 225h1M342 225h1M427 225h1M514 225h3M73 226h1M85 226h2M173 226h1M425 226h1M512 226h2M525 226h1M74 227h3M175 227h1M257 227h1M341 227h1M423 227h1M522 227h3M77 228h4M518 228h4M81 229h3M177 229h1M259 229h1M339 229h1M421 229h1M515 229h3M71 230h2M84 230h2M179 230h1M419 230h1M513 230h2M526 230h2M73 231h3M181 231h1M338 231h1M417 231h1M523 231h3M76 232h4M183 232h1M415 232h1M519 232h4M80 233h3M185 233h1M261 233h1M337 233h1M413 233h1M516 233h3M70 234h3M83 234h2M187 234h1M411 234h1M514 234h2M526 234h3M73 235h4M189 235h1M262 235h1M336 235h1M409 235h1M522 235h4M77 236h4M518 236h4M81 237h3M191 237h1M263 237h1M335 237h1M407 237h1M515 237h3M193 238h1M195 239h1M264 239h1M334 239h1M197 240h1M401 240h1M199 241h1M266 241h1M332 241h1M399 241h1M68 242h3M201 242h1M397 242h1M528 242h3M71 243h4M267 243h1M331 243h1M524 243h4M75 244h4M203 244h1M395 244h1M520 244h4M79 245h3M205 245h1M268 245h1M330 245h1M393 245h1M517 245h3M67 246h3M207 246h1M391 246h1M529 246h3M70 247h4M209 247h1M269 247h1M329 247h1M389 247h1M525 247h4M74 248h4M211 248h1M387 248h1M521 248h4M78 249h3M213 249h1M270 249h1M328 249h1M385 249h1M518 249h3M66 250h3M383 250h1M530 250h3M69 251h4M215 251h1M271 251h1M327 251h1M526 251h4M73 252h4M217 252h1M381 252h1M522 252h4M77 253h3M219 253h1M272 253h1M326 253h1M379 253h1M519 253h3M65 254h3M221 254h1M377 254h1M531 254h3M68 255h4M223 255h1M274 255h1M324 255h1M375 255h1M527 255h4M72 256h4M225 256h1M373 256h1M523 256h4M76 257h3M227 257h1M275 257h1M323 257h1M371 257h1M520 257h3M229 259h1M276 259h1M322 259h1M369 259h1M231 260h1M367 260h1M233 261h1M277 261h1M321 261h1M365 261h1M64 262h3M235 262h1M363 262h1M532 262h3M67 263h7M237 263h1M278 263h1M320 263h1M361 263h1M525 263h7M74 264h4M239 264h1M359 264h1M521 264h4M279 265h1M319 265h1M63 266h4M241 266h1M357 266h1M532 266h4M67 267h6M243 267h1M281 267h1M317 267h1M355 267h1M526 267h6M73 268h4M245 268h1M353 268h1M522 268h4M247 269h1M282 269h1M316 269h1M351 269h1M62 270h4M249 270h1M349 270h1M533 270h4M66 271h7M251 271h1M283 271h1M315 271h1M347 271h1M526 271h7M73 272h3M253 272h1M345 272h1M523 272h3M284 273h1M314 273h1M255 274h1M343 274h1M62 275h7M257 275h1M285 275h1M313 275h1M341 275h1M530 275h7M69 276h7M259 276h1M339 276h1M523 276h7M261 277h1M286 277h1M312 277h1M337 277h1M263 278h1M335 278h1M265 279h1M287 279h1M311 279h1M333 279h1M267 281h1M289 281h1M309 281h1M331 281h1M269 282h1M329 282h1M62 283h6M271 283h1M290 283h1M308 283h1M327 283h1M530 283h7M68 284h8M273 284h1M325 284h1M523 284h7M275 285h1M291 285h1M307 285h1M323 285h1M277 286h1M321 286h1M61 287h7M279 287h1M292 287h1M306 287h1M319 287h1M530 287h8M68 288h7M524 288h6M281 289h1M293 289h1M305 289h1M317 289h1M283 290h1M315 290h1M61 291h7M285 291h1M294 291h1M304 291h1M313 291h1M531 291h7M68 292h7M287 292h1M311 292h1M524 292h7M289 293h1M296 293h1M302 293h1M309 293h1M291 294h1M307 294h1M61 295h7M297 295h1M301 295h1M531 295h7M68 296h7M293 296h1M305 296h1M524 296h7M295 297h1M298 297h1M300 297h1M303 297h1M297 298h1M301 298h1M299 299h1M297 300h1M301 300h1M295 301h1M298 301h1M300 301h1M303 301h1M68 302h7M293 302h1M305 302h1M524 302h7M61 303h7M297 303h1M301 303h1M531 303h7M291 304h1M307 304h1M289 305h1M296 305h1M302 305h1M309 305h1M68 306h7M287 306h1M311 306h1M524 306h7M61 307h7M285 307h1M294 307h1M304 307h1M313 307h1M531 307h7M283 308h1M315 308h1M281 309h1M293 309h1M305 309h1M317 309h1M68 310h8M523 310h7M62 311h6M279 311h1M292 311h1M306 311h1M319 311h1M530 311h7M277 312h1M321 312h1M275 313h1M291 313h1M307 313h1M323 313h1M68 314h8M273 314h1M325 314h1M523 314h7M62 315h6M271 315h1M290 315h1M308 315h1M327 315h1M530 315h7M269 316h1M329 316h1M267 317h1M289 317h1M309 317h1M331 317h1M265 319h1M287 319h1M311 319h1M333 319h1M263 320h1M335 320h1M261 321h1M286 321h1M312 321h1M337 321h1M69 322h7M259 322h1M339 322h1M523 322h7M62 323h7M257 323h1M285 323h1M313 323h1M341 323h1M530 323h7M255 324h1M343 324h1M284 325h1M314 325h1M73 326h4M253 326h1M345 326h1M522 326h4M66 327h7M251 327h1M283 327h1M315 327h1M347 327h1M526 327h7M63 328h3M249 328h1M349 328h1M533 328h3M247 329h1M282 329h1M316 329h1M351 329h1M73 330h4M245 330h1M353 330h1M522 330h4M67 331h6M243 331h1M281 331h1M317 331h1M355 331h1M526 331h6M63 332h4M241 332h1M357 332h1M532 332h4M279 333h1M319 333h1M74 334h4M239 334h1M359 334h1M521 334h4M67 335h7M237 335h1M278 335h1M320 335h1M361 335h1M525 335h7M64 336h3M235 336h1M363 336h1M532 336h3M233 337h1M277 337h1M321 337h1M365 337h1M231 338h1M367 338h1M229 339h1M276 339h1M322 339h1M369 339h1M76 341h3M227 341h1M275 341h1M323 341h1M371 341h1M520 341h3M72 342h4M225 342h1M373 342h1M523 342h4M68 343h4M274 343h1M324 343h1M375 343h1M527 343h4M66 344h2M221 344h1M377 344h1M531 344h2M77 345h3M219 345h1M272 345h1M326 345h1M379 345h1M519 345h3M73 346h4M217 346h1M381 346h1M522 346h4M69 347h4M215 347h1M271 347h1M327 347h1M526 347h4M66 348h3M383 348h1M530 348h3M78 349h3M213 349h1M270 349h1M328 349h1M385 349h1M518 349h3M74 350h4M211 350h1M387 350h1M521 350h4M70 351h4M209 351h1M269 351h1M329 351h1M389 351h1M525 351h4M67 352h3M207 352h1M391 352h1M529 352h3M79 353h3M205 353h1M268 353h1M330 353h1M393 353h1M517 353h3M75 354h4M203 354h1M395 354h1M520 354h4M71 355h4M267 355h1M331 355h1M524 355h4M68 356h3M201 356h1M397 356h1M528 356h3M199 357h1M266 357h1M332 357h1M399 357h1M197 358h1M401 358h1M195 359h1M264 359h1M334 359h1M403 359h1M193 360h1M405 360h1M81 361h3M191 361h1M263 361h1M335 361h1M407 361h1M515 361h3M77 362h4M518 362h4M73 363h4M189 363h1M262 363h1M336 363h1M409 363h1M522 363h4M70 364h3M83 364h2M187 364h1M411 364h1M514 364h2M526 364h3M80 365h3M185 365h1M337 365h1M413 365h1M516 365h3M76 366h4M183 366h1M415 366h1M519 366h4M73 367h3M181 367h1M260 367h1M338 367h1M417 367h1M523 367h3M71 368h2M84 368h2M179 368h1M419 368h1M513 368h2M526 368h2M81 369h3M177 369h1M259 369h1M339 369h1M421 369h1M515 369h3M77 370h4M518 370h4M74 371h3M175 371h1M257 371h1M341 371h1M423 371h1M522 371h3M73 372h1M85 372h2M173 372h1M425 372h1M512 372h2M525 372h1M82 373h3M171 373h1M256 373h1M342 373h1M427 373h1M514 373h3M79 374h3M169 374h1M429 374h1M517 374h3M76 375h3M167 375h1M255 375h1M343 375h1M431 375h1M520 375h3M74 376h2M165 376h1M433 376h1M523 376h2M254 377h1M344 377h1M163 378h1M435 378h1M88 379h2M161 379h1M253 379h1M345 379h1M437 379h1M509 379h2M86 380h2M159 380h1M439 380h1M511 380h2M83 381h3M157 381h1M252 381h1M346 381h1M441 381h1M513 381h3M80 382h3M155 382h1M443 382h1M516 382h3M78 383h2M90 383h1M153 383h1M250 383h1M348 383h1M445 383h1M508 383h1M519 383h2M77 384h1M88 384h2M151 384h1M447 384h1M509 384h2M521 384h1M85 385h3M249 385h1M349 385h1M511 385h3M82 386h3M149 386h1M449 386h1M514 386h3M80 387h2M91 387h2M147 387h1M248 387h1M350 387h1M451 387h1M506 387h2M517 387h2M78 388h2M89 388h2M145 388h1M453 388h1M508 388h2M519 388h2M86 389h3M143 389h1M247 389h1M351 389h1M455 389h1M510 389h2M84 390h2M93 390h1M141 390h1M457 390h1M505 390h1M512 390h3M82 391h2M91 391h2M139 391h1M246 391h1M459 391h1M506 391h2M515 391h2M80 392h2M89 392h2M508 392h2M517 392h2M87 393h2M137 393h1M245 393h1M353 393h1M461 393h1M510 393h2M85 394h2M135 394h1M463 394h1M512 394h2M83 395h2M133 395h1M244 395h1M354 395h1M465 395h1M514 395h2M82 396h1M131 396h1M467 396h1M516 396h1M96 397h2M242 397h1M356 397h1M501 397h1M94 398h2M502 398h2M92 399h2M241 399h1M357 399h1M504 399h2M90 400h2M506 400h2M88 401h2M98 401h2M240 401h1M358 401h1M499 401h1M508 401h2M86 402h2M96 402h2M500 402h2M510 402h2M85 403h1M94 403h2M239 403h1M359 403h1M502 403h2M512 403h2M92 404h2M504 404h2M90 405h2M99 405h2M238 405h1M360 405h1M498 405h2M506 405h2M88 406h2M97 406h2M500 406h2M508 406h2M87 407h1M95 407h2M237 407h1M361 407h1M502 407h1M510 407h2M94 408h1M102 408h1M496 408h1M503 408h2M92 409h2M100 409h2M235 409h1M363 409h1M497 409h2M505 409h2M90 410h2M98 410h2M499 410h2M507 410h2M89 411h1M96 411h2M234 411h1M364 411h1M501 411h2M509 411h1M94 412h2M503 412h2M92 413h2M233 413h1M365 413h1M505 413h2M91 414h1M507 414h1M106 415h1M232 415h1M366 415h1M492 415h1M104 416h2M493 416h2M103 417h1M231 417h1M367 417h1M495 417h1M101 418h2M108 418h1M490 418h1M496 418h2M99 419h2M106 419h2M230 419h1M368 419h1M491 419h2M498 419h2M98 420h1M105 420h1M493 420h1M500 420h1M96 421h2M103 421h2M229 421h1M369 421h1M494 421h2M501 421h2M95 422h1M101 422h2M109 422h2M488 422h2M496 422h2M503 422h1M100 423h1M108 423h1M227 423h1M371 423h1M490 423h1M498 423h1M98 424h2M106 424h2M491 424h2M499 424h2M97 425h1M105 425h1M111 425h2M226 425h1M372 425h1M486 425h2M493 425h1M501 425h1M103 426h2M110 426h1M488 426h1M494 426h2M102 427h1M108 427h2M225 427h1M373 427h1M489 427h2M496 427h1M100 428h2M107 428h1M491 428h1M497 428h2M105 429h2M224 429h1M374 429h1M492 429h2M104 430h1M494 430h1M102 431h2M117 431h1M223 431h1M375 431h1M481 431h1M495 431h2M115 432h2M482 432h2M114 433h1M222 433h1M376 433h1M484 433h1M113 434h1M120 434h1M478 434h1M485 434h1M111 435h2M118 435h2M220 435h1M378 435h1M479 435h2M486 435h2M110 436h1M117 436h1M481 436h1M488 436h1M109 437h1M116 437h1M122 437h1M219 437h1M379 437h1M476 437h1M482 437h1M489 437h1M107 438h2M114 438h2M121 438h1M477 438h1M483 438h2M490 438h2M113 439h1M119 439h2M218 439h1M380 439h1M478 439h2M485 439h1M112 440h1M118 440h1M124 440h1M474 440h1M480 440h1M486 440h1M110 441h2M117 441h1M123 441h1M217 441h1M381 441h1M475 441h1M481 441h1M487 441h2M109 442h1M116 442h1M122 442h1M476 442h1M482 442h1M489 442h1M115 443h1M121 443h1M216 443h1M382 443h1M477 443h1M483 443h1M113 444h2M119 444h2M478 444h1M484 444h2M112 445h1M118 445h1M215 445h1M383 445h1M479 445h2M486 445h1M117 446h1M129 446h1M469 446h1M481 446h1M116 447h1M128 447h1M214 447h1M384 447h1M470 447h1M482 447h1M115 448h1M127 448h1M471 448h1M483 448h1M126 449h1M132 449h1M212 449h1M386 449h1M466 449h1M472 449h1M124 450h2M131 450h1M467 450h1M473 450h1M123 451h1M130 451h1M211 451h1M387 451h1M468 451h1M474 451h2M122 452h1M129 452h1M135 452h1M463 452h1M469 452h1M476 452h1M121 453h1M127 453h2M134 453h1M210 453h1M388 453h1M464 453h1M470 453h1M477 453h1M120 454h1M126 454h1M133 454h1M465 454h1M471 454h2M478 454h1M125 455h1M132 455h1M137 455h1M209 455h1M461 455h1M466 455h1M473 455h1M124 456h1M130 456h2M136 456h1M462 456h1M467 456h1M474 456h1M123 457h1M129 457h1M135 457h1M208 457h1M390 457h1M463 457h1M468 457h2M475 457h1M122 458h1M128 458h1M134 458h1M464 458h1M470 458h1M476 458h1M127 459h1M133 459h1M207 459h1M391 459h1M465 459h1M471 459h1M126 460h1M132 460h1M466 460h1M472 460h1M125 461h1M131 461h1M143 461h1M205 461h1M393 461h1M455 461h1M467 461h1M473 461h1M130 462h1M142 462h1M456 462h1M468 462h1M129 463h1M141 463h1M146 463h1M204 463h1M394 463h1M452 463h1M457 463h1M469 463h1M128 464h1M140 464h1M145 464h1M453 464h1M458 464h1M470 464h1M139 465h1M144 465h1M203 465h1M395 465h1M454 465h1M459 465h1M138 466h1M143 466h1M149 466h1M449 466h1M455 466h1M460 466h1M137 467h1M142 467h1M148 467h1M202 467h1M396 467h1M450 467h1M456 467h1M461 467h1M136 468h1M141 468h1M147 468h1M451 468h1M457 468h1M462 468h1M135 469h1M141 469h1M146 469h1M152 469h1M446 469h1M452 469h1M457 469h1M463 469h1M134 470h1M140 470h1M145 470h1M151 470h1M447 470h1M453 470h1M458 470h1M464 470h1M139 471h1M144 471h1M150 471h1M448 471h1M454 471h1M459 471h1M138 472h1M144 472h1M149 472h1M449 472h1M454 472h1M460 472h1M137 473h1M143 473h1M148 473h1M450 473h1M455 473h1M461 473h1M142 474h1M147 474h1M158 474h1M440 474h1M451 474h1M456 474h1M141 475h1M147 475h1M157 475h1M441 475h1M451 475h1M457 475h1M140 476h1M146 476h1M156 476h1M161 476h1M437 476h1M442 476h1M452 476h1M458 476h1M145 477h1M155 477h1M160 477h1M438 477h1M443 477h1M453 477h1M144 478h1M154 478h1M159 478h1M164 478h1M434 478h1M439 478h1M444 478h1M454 478h1M153 479h1M159 479h1M163 479h1M435 479h1M439 479h1M445 479h1M153 480h1M158 480h1M163 480h1M435 480h1M440 480h1M445 480h1M152 481h1M157 481h1M162 481h1M167 481h1M431 481h1M436 481h1M441 481h1M446 481h1M151 482h1M156 482h1M161 482h1M166 482h1M432 482h1M437 482h1M442 482h1M447 482h1M150 483h1M155 483h1M160 483h1M166 483h1M432 483h1M438 483h1M443 483h1M448 483h1M149 484h1M154 484h1M160 484h1M165 484h1M433 484h1M438 484h1M444 484h1M154 485h1M159 485h1M164 485h1M434 485h1M439 485h1M444 485h1M153 486h1M158 486h1M163 486h1M173 486h1M425 486h1M435 486h1M440 486h1M445 486h1M157 487h1M163 487h1M173 487h1M425 487h1M435 487h1M441 487h1M157 488h1M162 488h1M172 488h1M176 488h1M422 488h1M426 488h1M436 488h1M441 488h1M156 489h1M161 489h1M171 489h1M176 489h1M422 489h1M427 489h1M437 489h1M442 489h1M160 490h1M171 490h1M175 490h1M180 490h1M418 490h1M423 490h1M427 490h1M438 490h1M160 491h1M170 491h1M174 491h1M179 491h1M419 491h1M424 491h1M428 491h1M438 491h1M169 492h1M174 492h1M179 492h1M183 492h1M415 492h1M419 492h1M424 492h1M429 492h1M169 493h1M173 493h1M178 493h1M182 493h1M416 493h1M420 493h1M425 493h1M429 493h1M168 494h1M172 494h1M177 494h1M182 494h1M416 494h1M421 494h1M426 494h1M430 494h1M167 495h1M172 495h1M177 495h1M181 495h1M417 495h1M421 495h1M426 495h1M431 495h1M167 496h1M171 496h1M176 496h1M180 496h1M190 496h1M408 496h1M418 496h1M422 496h1M427 496h1M431 496h1M170 497h1M176 497h1M180 497h1M189 497h1M409 497h1M418 497h1M422 497h1M428 497h1M170 498h1M175 498h1M179 498h1M189 498h1M193 498h1M405 498h1M409 498h1M419 498h1M423 498h1M428 498h1M174 499h1M179 499h1M188 499h1M193 499h1M197 499h1M401 499h1M405 499h1M410 499h1M419 499h1M424 499h1M174 500h1M178 500h1M188 500h1M192 500h1M196 500h1M402 500h1M406 500h1M410 500h1M420 500h1M424 500h1M173 501h1M177 501h1M187 501h1M192 501h1M196 501h1M201 501h1M397 501h1M402 501h1M406 501h1M411 501h1M421 501h1M425 501h1M177 502h1M187 502h1M191 502h1M195 502h1M200 502h1M398 502h1M403 502h1M407 502h1M411 502h1M421 502h1M176 503h1M186 503h1M190 503h1M195 503h1M200 503h1M398 503h1M403 503h1M408 503h1M412 503h1M422 503h1M186 504h1M190 504h1M194 504h1M199 504h1M399 504h1M404 504h1M408 504h1M412 504h1M185 505h1M189 505h1M194 505h1M199 505h1M208 505h1M390 505h1M399 505h1M404 505h1M409 505h1M413 505h1M185 506h1M189 506h1M193 506h1M198 506h1M207 506h1M211 506h1M387 506h1M391 506h1M400 506h1M405 506h1M409 506h1M413 506h1M184 507h1M188 507h1M193 507h1M198 507h1M207 507h1M211 507h1M387 507h1M391 507h1M400 507h1M405 507h1M410 507h1M414 507h1M188 508h1M192 508h1M197 508h1M206 508h1M210 508h1M215 508h1M383 508h1M388 508h1M392 508h1M401 508h1M406 508h1M410 508h1M187 509h1M192 509h1M197 509h1M206 509h1M210 509h1M214 509h1M219 509h1M379 509h1M384 509h1M388 509h1M392 509h1M401 509h1M406 509h1M411 509h1M191 510h1M196 510h1M205 510h1M209 510h1M214 510h1M219 510h1M379 510h1M384 510h1M389 510h1M393 510h1M402 510h1M407 510h1M191 511h1M196 511h1M205 511h1M209 511h1M213 511h1M218 511h1M380 511h1M385 511h1M389 511h1M393 511h1M402 511h1M407 511h1M195 512h1M204 512h1M208 512h1M213 512h1M218 512h1M226 512h1M372 512h1M380 512h1M385 512h1M390 512h1M394 512h1M403 512h1M195 513h1M204 513h1M208 513h1M213 513h1M217 513h1M226 513h1M230 513h1M368 513h1M372 513h1M381 513h1M385 513h1M390 513h1M394 513h1M403 513h1M203 514h1M208 514h1M212 514h1M217 514h1M225 514h1M230 514h1M234 514h1M364 514h1M368 514h1M373 514h1M381 514h1M386 514h1M390 514h1M395 514h1M203 515h1M207 515h1M212 515h1M217 515h1M225 515h1M229 515h1M234 515h1M237 515h1M361 515h1M364 515h1M369 515h1M373 515h1M381 515h1M386 515h1M391 515h1M395 515h1M202 516h1M207 516h1M212 516h1M216 516h1M225 516h1M229 516h1M233 516h1M237 516h1M361 516h1M365 516h1M369 516h1M373 516h1M382 516h1M386 516h1M391 516h1M396 516h1M206 517h1M211 517h1M216 517h1M224 517h1M229 517h1M233 517h1M237 517h1M245 517h1M353 517h1M361 517h1M365 517h1M369 517h1M374 517h1M382 517h1M387 517h1M392 517h1M206 518h1M211 518h1M216 518h1M224 518h1M228 518h1M233 518h1M236 518h1M245 518h1M249 518h1M349 518h1M353 518h1M362 518h1M365 518h1M370 518h1M374 518h1M382 518h1M387 518h1M392 518h1M210 519h1M215 519h1M224 519h1M228 519h1M232 519h1M236 519h1M245 519h1M249 519h1M253 519h1M345 519h1M349 519h1M353 519h1M362 519h1M366 519h1M370 519h1M374 519h1M383 519h1M388 519h1M210 520h1M215 520h1M223 520h1M228 520h1M232 520h1M236 520h1M244 520h1M249 520h1M253 520h1M257 520h1M341 520h1M345 520h1M349 520h1M354 520h1M362 520h1M366 520h1M370 520h1M375 520h1M383 520h1M388 520h1M214 521h1M223 521h1M228 521h1M232 521h1M236 521h1M244 521h1M248 521h1M253 521h1M257 521h1M264 521h1M334 521h1M341 521h1M345 521h1M350 521h1M354 521h1M362 521h1M366 521h1M370 521h1M375 521h1M384 521h1M214 522h1M223 522h1M227 522h1M232 522h1M235 522h1M244 522h1M248 522h1M252 522h1M257 522h1M264 522h1M268 522h1M326 522h1M330 522h1M334 522h1M341 522h1M346 522h1M350 522h1M354 522h1M363 522h1M366 522h1M371 522h1M375 522h1M222 523h1M227 523h1M231 523h1M235 523h1M244 523h1M248 523h1M252 523h1M256 523h1M264 523h1M268 523h1M272 523h1M276 523h1M284 523h1M310 523h1M314 523h1M322 523h1M326 523h1M330 523h1M334 523h1M342 523h1M346 523h1M350 523h1M354 523h1M363 523h1M367 523h1M371 523h1M376 523h1M222 524h1M227 524h1M231 524h1M235 524h1M243 524h1M248 524h1M252 524h1M256 524h1M264 524h1M268 524h1M272 524h1M276 524h1M284 524h1M288 524h1M292 524h1M296 524h1M302 524h1M306 524h1M310 524h1M314 524h1M322 524h1M326 524h1M330 524h1M334 524h1M342 524h1M346 524h1M350 524h1M355 524h1M363 524h1M367 524h1M371 524h1M376 524h1M226 525h1M231 525h1M235 525h1M243 525h1M247 525h1M252 525h1M256 525h1M263 525h1M268 525h1M272 525h1M276 525h1M284 525h1M288 525h1M292 525h1M296 525h1M302 525h1M306 525h1M310 525h1M314 525h1M322 525h1M326 525h1M330 525h1M335 525h1M342 525h1M346 525h1M351 525h1M355 525h1M363 525h1M367 525h1M372 525h1M230 526h1M234 526h1M243 526h1M247 526h1M251 526h1M256 526h1M263 526h1M267 526h1M271 526h1M276 526h1M284 526h1M288 526h1M292 526h1M296 526h1M302 526h1M306 526h1M310 526h1M314 526h1M322 526h1M327 526h1M331 526h1M335 526h1M342 526h1M347 526h1M351 526h1M355 526h1M364 526h1M368 526h1M230 527h1M234 527h1M243 527h1M247 527h1M251 527h1M255 527h1M263 527h1M267 527h1M271 527h1M276 527h1M284 527h1M288 527h1M292 527h1M296 527h1M302 527h1M306 527h1M310 527h1M314 527h1M322 527h1M327 527h1M331 527h1M335 527h1M343 527h1M347 527h1M351 527h1M355 527h1M364 527h1M368 527h1M234 528h1M242 528h1M247 528h1M251 528h1M255 528h1M263 528h1M267 528h1M271 528h1M276 528h1M284 528h1M288 528h1M292 528h1M296 528h1M302 528h1M306 528h1M310 528h1M314 528h1M322 528h1M327 528h1M331 528h1M335 528h1M343 528h1M347 528h1M351 528h1M356 528h1M364 528h1M242 529h1M246 529h1M251 529h1M255 529h1M263 529h1M267 529h1M271 529h1M276 529h1M284 529h1M288 529h1M292 529h1M296 529h1M302 529h1M306 529h1M310 529h1M314 529h1M322 529h1M327 529h1M331 529h1M335 529h1M343 529h1M347 529h1M352 529h1M356 529h1M242 530h1M246 530h1M250 530h1M255 530h1M263 530h1M267 530h1M271 530h1M275 530h1M283 530h1M287 530h1M292 530h1M296 530h1M302 530h1M306 530h1M311 530h1M315 530h1M323 530h1M327 530h1M331 530h1M335 530h1M343 530h1M348 530h1M352 530h1M356 530h1M246 531h1M250 531h1M254 531h1M263 531h1M267 531h1M271 531h1M275 531h1M283 531h1M287 531h1M291 531h1M295 531h1M303 531h1M307 531h1M311 531h1M315 531h1M323 531h1M327 531h1M331 531h1M335 531h1M344 531h1M348 531h1M352 531h1M250 532h1M254 532h1M262 532h1M266 532h1M271 532h1M275 532h1M283 532h1M287 532h1M291 532h1M295 532h1M303 532h1M307 532h1M311 532h1M315 532h1M323 532h1M327 532h1M332 532h1M336 532h1M344 532h1M348 532h1M254 533h1M262 533h1M266 533h1M270 533h1M275 533h1M283 533h1M287 533h1M291 533h1M295 533h1M303 533h1M307 533h1M311 533h1M315 533h1M323 533h1M328 533h1M332 533h1M336 533h1M262 534h1M266 534h1M270 534h1M275 534h1M283 534h1M287 534h1M291 534h1M295 534h1M303 534h1M307 534h1M311 534h1M315 534h1M323 534h1M328 534h1M332 534h1M336 534h1M266 535h1M270 535h1M275 535h1M283 535h1M287 535h1M291 535h1M295 535h1M303 535h1M307 535h1M311 535h1M315 535h1M323 535h1M328 535h1M332 535h1M270 536h1M275 536h1M283 536h1M287 536h1M291 536h1M295 536h1M303 536h1M307 536h1M311 536h1M315 536h1M323 536h1M287 537h1M291 537h1M295 537h1M303 537h1M307 537h1"/>
<path stroke="#ff0000" transform="translate(0,0.5)" d="M235 38h5M238 39h2M237 40h1M239 40h1M236 41h1M239 41h1M235 42h1M239 42h1M234 43h1M225 44h1M233 44h1M226 45h1M232 45h1M227 46h1M231 46h1M228 47h1M230 47h1M229 48h1M228 49h1M230 49h1M227 50h1M231 50h1M226 51h1M232 51h1M225 52h1M233 52h1M224 53h1M223 54h1M744 106h1M752 106h1M745 107h1M751 107h1M746 108h1M750 108h1M746 109h1M750 109h1M744 110h9M746 111h1M750 111h1M746 112h1M750 112h1M745 113h1M751 113h1M744 114h1M752 114h1M747 147h3M745 148h2M750 148h2M744 149h1M749 149h1M752 149h1M745 150h2M749 150h1M752 150h1M744 151h1M747 151h1M750 151h2M744 152h1M747 152h1M752 152h1M745 153h2M750 153h2M747 154h3M267 160h1M277 160h1M269 161h1M271 162h1M281 162h1M273 163h1M275 164h1M277 165h1M279 167h1M289 167h1M281 168h1M283 169h1M285 170h1M293 170h1M287 171h1M289 172h1M297 172h1M291 173h1M293 175h1M301 175h1M295 176h1M297 177h1M305 177h1M299 178h1M301 179h1M309 179h1M303 180h1M305 182h1M313 182h1M307 183h1M309 184h1M317 184h1M311 185h1M313 186h1M744 186h1M746 186h1M748 186h1M315 187h1M321 187h1M745 187h1M747 187h1M749 187h1M745 188h1M747 188h1M749 188h1M317 189h1M325 189h1M745 189h1M747 189h1M749 189h1M319 190h1M745 190h1M747 190h1M749 190h1M321 191h1M745 191h1M747 191h1M749 191h1M323 192h1M329 192h1M745 192h1M747 192h1M749 192h1M752 192h1M325 193h1M745 193h1M747 193h1M749 193h1M752 193h1M327 194h1M333 194h1M750 194h2M329 195h1M331 197h1M337 197h1M333 198h1M335 199h1M341 199h1M337 200h1M339 201h1M341 202h1M345 202h1M405 203h1M343 204h1M349 204h1M405 204h1M345 205h1M405 205h1M347 206h1M353 206h1M405 206h1M349 207h1M405 207h1M351 208h1M405 208h1M353 209h1M357 209h1M405 209h1M405 210h1M355 211h1M361 211h1M405 211h1M357 212h1M404 212h1M359 213h1M404 213h1M361 214h1M365 214h1M404 214h1M363 215h1M404 215h1M365 216h1M369 216h1M404 216h1M367 217h1M404 217h1M404 218h1M369 219h1M373 219h1M404 219h1M371 220h1M404 220h1M373 221h1M377 221h1M404 221h1M375 222h1M404 222h1M377 223h1M404 223h1M379 224h1M381 224h1M404 224h1M404 225h1M381 226h1M385 226h1M404 226h1M383 227h1M404 227h1M385 228h1M404 228h1M387 229h1M389 229h1M403 229h1M389 230h1M403 230h1M391 231h1M393 231h1M403 231h1M403 232h1M393 233h1M397 233h1M403 233h1M395 234h1M403 234h1M397 235h1M403 235h1M399 236h1M401 236h1M403 236h1M747 236h3M401 237h1M403 237h1M745 237h2M750 237h2M403 238h1M405 238h1M745 238h1M751 238h1M403 239h1M405 239h1M744 239h1M752 239h1M403 240h1M744 240h1M748 240h1M752 240h1M403 241h1M407 241h1M409 241h1M744 241h1M752 241h1M403 242h1M409 242h1M745 242h1M751 242h1M403 243h1M411 243h1M413 243h1M745 243h2M750 243h2M403 244h1M413 244h1M747 244h3M403 245h1M415 245h1M402 246h1M417 246h1M402 247h1M402 248h1M419 248h1M421 248h1M402 249h1M421 249h1M402 250h1M423 250h1M402 251h1M425 251h1M402 252h1M427 252h1M402 253h1M429 253h1M402 254h1M402 255h1M431 255h1M402 256h1M433 256h1M402 257h1M435 257h1M402 258h1M402 259h1M436 259h1M402 260h1M436 260h1M402 261h1M435 261h1M402 262h1M435 262h1M401 263h1M434 263h1M401 264h1M434 264h1M401 265h1M433 265h1M401 266h1M433 266h1M401 267h1M432 267h1M401 268h1M432 268h1M401 269h1M431 269h1M401 270h1M431 270h1M401 271h1M430 271h1M401 272h1M430 272h1M401 273h1M429 273h1M401 274h1M428 274h1M401 275h1M428 275h1M401 276h1M427 276h1M750 276h3M401 277h1M427 277h1M751 277h2M401 278h1M426 278h1M750 278h1M752 278h1M401 279h1M426 279h1M746 279h2M749 279h1M400 280h1M425 280h1M745 280h1M748 280h1M400 281h1M425 281h1M744 281h1M749 281h1M400 282h1M424 282h1M744 282h1M749 282h1M400 283h1M424 283h1M745 283h1M748 283h1M400 284h1M423 284h1M746 284h2M400 285h1M423 285h1M422 286h1M751 286h1M400 287h1M422 287h1M745 287h2M750 287h1M400 288h1M421 288h1M747 288h1M750 288h1M400 289h1M420 289h1M747 289h1M750 289h1M400 290h1M420 290h1M746 290h1M750 290h1M400 291h1M419 291h1M746 291h1M750 291h1M400 292h1M419 292h1M745 292h1M750 292h1M400 293h1M418 293h1M745 293h8M400 294h1M418 294h1M750 294h1M400 295h1M417 295h1M400 296h1M417 296h1M399 297h1M416 297h1M399 298h1M416 298h1M399 299h1M415 299h1M399 300h1M415 300h1M399 301h1M414 301h1M399 302h1M414 302h1M399 303h1M413 303h1M399 304h1M412 304h1M149 305h1M399 305h1M412 305h1M399 306h1M411 306h1M399 307h1M411 307h1M399 308h1M410 308h1M399 309h1M410 309h1M399 310h1M409 310h1M399 311h1M409 311h1M399 312h1M408 312h1M399 313h1M408 313h1M398 314h1M407 314h1M398 315h1M407 315h1M398 316h1M406 316h1M398 317h1M406 317h1M398 318h1M405 318h1M398 319h1M404 319h1M398 320h1M404 320h1M398 321h1M403 321h1M398 322h1M403 322h1M398 323h1M402 323h1M398 324h1M402 324h1M398 325h1M401 325h1M398 326h1M401 326h1M446 326h1M398 327h1M400 327h1M398 328h1M400 328h1M398 329h2M398 330h2M397 331h2M397 332h2M397 333h1M396 334h2M471 334h5M396 335h2M469 335h2M476 335h2M395 336h1M397 336h1M468 336h1M478 336h1M395 337h1M397 337h1M467 337h1M479 337h1M394 338h1M397 338h1M466 338h1M480 338h1M394 339h1M397 339h1M466 339h1M480 339h1M393 340h1M397 340h1M465 340h1M481 340h1M393 341h1M397 341h1M465 341h1M481 341h1M392 342h1M397 342h1M465 342h1M473 342h1M481 342h1M392 343h1M397 343h1M465 343h1M481 343h1M391 344h1M397 344h1M465 344h1M481 344h1M391 345h1M397 345h1M466 345h1M480 345h1M390 346h1M397 346h1M466 346h1M480 346h1M389 347h1M397 347h1M467 347h1M479 347h1M389 348h1M396 348h1M468 348h1M478 348h1M388 349h1M396 349h1M469 349h2M476 349h2M388 350h1M396 350h1M471 350h5M387 351h1M396 351h1M387 352h1M396 352h1M386 353h1M396 353h1M386 354h1M396 354h1M385 355h1M396 355h1M385 356h1M396 356h1M384 357h1M396 357h1M384 358h1M396 358h1M383 359h1M396 359h1M550 359h5M383 360h1M396 360h1M549 360h1M555 360h1M382 361h1M396 361h1M548 361h1M556 361h1M381 362h1M396 362h1M547 362h1M557 362h1M381 363h1M396 363h1M546 363h1M558 363h1M380 364h1M396 364h1M546 364h1M558 364h1M380 365h1M395 365h1M546 365h1M558 365h1M379 366h1M395 366h1M546 366h1M558 366h1M379 367h1M395 367h1M546 367h1M558 367h1M378 368h1M395 368h1M547 368h1M557 368h1M378 369h1M395 369h1M548 369h1M556 369h1M377 370h1M395 370h1M548 370h1M556 370h1M377 371h1M395 371h1M544 371h1M548 371h1M556 371h1M376 372h1M395 372h1M545 372h1M547 372h1M557 372h1M376 373h1M395 373h1M546 373h1M558 373h1M375 374h1M395 374h1M559 374h1M375 375h1M395 375h1M560 375h1M374 376h1M373 377h1M395 377h1M373 378h1M395 378h1M372 379h1M395 379h1M372 380h1M395 380h1M371 381h1M395 381h1M371 382h1M394 382h1M370 383h1M394 383h1M370 384h1M394 384h1M369 385h1M394 385h1M369 386h1M394 386h1M368 387h1M394 387h1M368 388h1M394 388h1M367 389h1M394 389h1M367 390h1M394 390h1M366 391h1M394 391h1M365 392h1M394 392h1M365 393h1M394 393h1M364 394h1M394 394h1M364 395h1M394 395h1M363 396h1M394 396h1M363 397h1M394 397h1M362 398h1M394 398h1M362 399h1M393 399h1M361 400h1M393 400h1M361 401h1M393 401h1M360 402h1M393 402h1M360 403h1M393 403h1M359 404h1M393 404h1M359 405h1M358 406h1M393 406h1M357 407h1M357 408h1M356 409h1M356 410h1M355 411h1M355 412h1M354 413h1M354 414h1M353 415h1M353 416h1M352 417h1M352 418h1M351 419h1M351 420h1M350 421h1M349 422h1M349 423h1M348 424h1M348 425h1M347 426h1M347 427h1M346 428h1M346 429h1M345 430h1M370 430h1M345 431h1M344 432h1M344 433h1M343 434h1M343 435h1M344 442h1M391 449h1M390 450h1M380 451h2M389 451h1M382 452h1M389 452h1M383 453h1M389 453h1M383 454h1M389 454h1M383 455h1M389 455h1M382 456h1M389 456h1M382 457h1M389 457h1M381 458h1M389 458h1M381 459h1M389 459h1M380 460h1M389 460h1M380 461h1M389 461h1M356 462h6M379 462h1M389 462h1M360 463h2M379 463h15M359 464h1M361 464h1M389 464h1M358 465h1M361 465h1M389 465h1M357 466h1M361 466h1M356 467h1M361 467h1M348 468h5M355 468h1M347 469h1M353 469h2M346 470h1M354 470h1M345 471h1M355 471h1M345 472h1M355 472h1M345 473h1M355 473h1M345 474h1M355 474h1M345 475h1M355 475h1M108 476h3M118 476h3M346 476h1M354 476h1M107 477h1M111 477h1M117 477h1M121 477h1M347 477h1M353 477h1M106 478h1M112 478h1M116 478h1M122 478h1M348 478h5M106 479h1M112 479h1M116 479h1M122 479h1M106 480h1M112 480h1M116 480h1M122 480h1M107 481h1M113 481h1M115 481h1M121 481h1M108 482h1M113 482h1M115 482h1M120 482h1M113 483h1M115 483h1M113 484h1M115 484h1M114 485h1M114 486h1M114 487h1M114 488h1M114 489h1M114 490h1M114 491h1M114 492h1"/>
<path stroke="#00ff00" transform="translate(0,0.5)" d="M482 110h5M481 111h1M487 111h1M480 112h1M488 112h1M480 113h1M488 113h1M480 114h1M488 114h1M481 115h1M487 115h1M476 116h7M486 116h7M476 120h17M360 124h1M372 124h1M361 125h1M371 125h1M362 126h1M370 126h1M745 126h1M751 126h1M362 127h1M370 127h1M746 127h1M750 127h1M362 128h1M366 128h1M370 128h1M747 128h3M362 129h1M366 129h1M370 129h1M746 129h1M750 129h1M362 130h9M745 130h1M751 130h1M362 131h1M366 131h1M370 131h1M745 131h1M751 131h1M362 132h1M366 132h1M370 132h1M745 132h1M751 132h1M361 133h1M366 133h1M371 133h1M746 133h1M750 133h1M360 134h1M366 134h1M372 134h1M747 134h3M366 135h1M365 136h3M364 137h1M368 137h1M364 138h1M368 138h1M364 139h1M368 139h1M365 140h3M355 160h1M268 161h1M269 162h1M272 165h1M273 166h1M353 166h1M744 166h1M746 166h1M748 166h1M353 167h1M745 167h1M747 167h1M749 167h1M751 167h1M276 168h1M350 168h1M745 168h1M747 168h1M749 168h3M277 169h1M353 169h1M745 169h1M747 169h1M749 169h1M751 169h1M347 170h1M745 170h1M747 170h1M749 170h1M751 170h1M354 171h1M745 171h1M747 171h1M749 171h1M751 171h1M280 172h1M344 172h1M745 172h1M747 172h1M749 172h1M751 172h1M281 173h1M354 173h1M745 173h1M747 173h1M750 173h1M341 174h1M749 174h1M751 174h1M354 175h1M284 176h1M338 176h1M285 177h1M355 177h1M335 179h1M355 179h1M288 180h1M289 181h1M332 181h1M355 181h1M329 183h1M356 183h1M292 184h2M326 185h1M356 185h1M296 187h1M323 187h1M356 187h1M297 188h1M320 189h1M357 189h1M300 191h1M317 191h1M357 191h1M301 192h1M395 192h1M314 193h1M357 193h1M395 193h1M395 194h1M304 195h1M311 195h1M358 195h1M394 195h1M305 196h1M394 196h1M308 197h1M358 197h1M394 197h1M394 198h1M305 199h1M308 199h2M358 199h1M393 200h1M359 201h1M393 201h1M302 202h1M393 202h1M312 203h2M359 203h1M393 203h1M299 204h1M392 204h1M359 205h1M392 205h1M404 205h1M296 206h1M316 206h1M392 206h1M745 206h1M748 206h1M750 206h2M317 207h1M360 207h1M392 207h1M744 207h2M748 207h2M752 207h1M293 208h1M392 208h1M404 208h1M745 208h1M747 208h1M749 208h1M752 208h1M360 209h1M391 209h1M745 209h1M747 209h1M750 209h2M290 210h1M320 210h1M391 210h1M745 210h1M747 210h1M751 210h1M321 211h1M360 211h1M391 211h1M403 211h1M746 211h1M752 211h1M287 212h1M391 212h1M746 212h1M752 212h1M361 213h1M390 213h1M746 213h1M752 213h1M284 214h1M324 214h2M390 214h1M402 214h1M751 214h1M361 215h1M390 215h1M281 216h1M390 216h1M361 217h1M390 217h1M401 217h1M278 218h1M328 218h2M389 218h1M362 219h1M389 219h1M275 220h1M389 220h1M400 220h1M362 221h1M389 221h1M272 222h1M332 222h2M388 222h1M42 223h1M48 223h1M54 223h1M362 223h1M388 223h1M400 223h1M41 224h2M47 224h2M53 224h1M388 224h1M41 225h1M43 225h1M47 225h1M49 225h1M53 225h1M269 225h1M336 225h1M363 225h1M388 225h1M40 226h1M43 226h1M46 226h1M49 226h1M52 226h1M337 226h1M388 226h1M399 226h1M39 227h1M43 227h1M45 227h1M49 227h1M51 227h1M266 227h1M363 227h1M387 227h1M39 228h1M44 228h2M50 228h2M387 228h1M38 229h1M44 229h1M50 229h1M263 229h1M340 229h2M363 229h1M398 229h1M387 230h1M260 231h1M364 231h1M387 231h1M386 232h1M397 232h1M42 233h1M48 233h1M54 233h1M257 233h1M344 233h2M364 233h1M386 233h1M41 234h2M47 234h2M53 234h1M386 234h1M41 235h1M43 235h1M47 235h1M49 235h1M53 235h1M254 235h1M364 235h1M386 235h1M396 235h1M40 236h1M43 236h1M46 236h1M49 236h1M52 236h1M385 236h1M39 237h1M43 237h1M45 237h1M49 237h1M51 237h1M251 237h1M348 237h2M365 237h1M385 237h1M39 238h1M44 238h2M50 238h2M385 238h1M396 238h1M38 239h1M44 239h1M50 239h1M248 239h1M365 239h1M385 239h1M385 240h1M467 240h1M475 240h1M245 241h1M352 241h2M365 241h1M384 241h1M395 241h1M468 241h1M474 241h1M384 242h1M469 242h5M242 243h1M366 243h1M384 243h1M468 243h1M474 243h1M356 244h2M384 244h1M394 244h1M467 244h1M475 244h1M239 245h1M366 245h1M383 245h1M467 245h1M475 245h1M383 246h1M467 246h1M475 246h1M366 247h1M383 247h1M393 247h1M467 247h1M475 247h1M236 248h1M360 248h2M383 248h1M467 248h1M475 248h1M367 249h1M383 249h1M468 249h1M474 249h1M233 250h1M382 250h1M392 250h1M469 250h5M367 251h1M382 251h1M471 251h1M230 252h1M364 252h2M382 252h1M471 252h1M367 253h1M382 253h1M391 253h1M471 253h1M227 254h1M382 254h1M467 254h9M368 255h1M381 255h1M471 255h1M224 256h1M368 256h2M381 256h1M391 256h1M471 256h1M746 256h1M750 256h1M368 257h1M381 257h1M442 257h1M747 257h3M221 258h1M381 258h1M746 258h1M750 258h1M368 259h1M373 259h1M380 259h1M390 259h1M746 259h1M750 259h1M218 260h1M372 260h1M380 260h1M746 260h1M750 260h1M369 261h1M380 261h1M747 261h3M215 262h1M380 262h1M389 262h1M748 262h1M369 263h1M376 263h2M380 263h1M746 263h5M212 264h1M379 264h1M748 264h1M369 265h1M379 265h1M388 265h1M209 266h1M379 266h1M747 266h3M370 267h1M379 267h3M746 267h1M750 267h1M206 268h1M378 268h1M387 268h1M746 268h1M750 268h1M370 269h1M378 269h1M746 269h1M750 269h1M378 270h1M747 270h3M203 271h1M370 271h1M378 271h1M384 271h2M387 271h1M748 271h1M378 272h1M746 272h5M200 273h1M371 273h1M377 273h1M748 273h1M377 274h1M386 274h1M389 274h1M748 274h1M197 275h1M371 275h1M377 275h1M388 275h1M377 276h1M194 277h1M371 277h1M377 277h1M385 277h1M376 278h1M392 278h2M191 279h1M372 279h1M376 279h1M376 280h1M384 280h1M188 281h1M372 281h1M376 281h1M375 282h1M396 282h2M185 283h1M372 283h1M375 283h1M383 283h1M375 284h1M182 285h1M373 285h1M375 285h1M375 286h1M383 286h1M400 286h2M179 287h1M373 287h2M374 288h1M176 289h1M373 289h2M382 289h1M405 289h1M374 290h1M404 290h1M173 291h1M373 291h2M373 292h1M381 292h1M373 293h2M409 293h1M170 294h1M373 294h1M408 294h1M373 295h2M380 295h1M167 296h1M372 296h1M372 297h1M375 297h1M412 297h2M164 298h1M372 298h1M379 298h1M372 299h1M375 299h1M161 300h1M372 300h1M371 301h1M375 301h1M379 301h1M416 301h2M158 302h1M371 302h1M371 303h1M376 303h1M155 304h1M371 304h1M378 304h1M421 304h1M157 305h1M370 305h1M376 305h1M420 305h1M159 306h1M370 306h1M745 306h1M751 306h1M161 307h1M370 307h1M376 307h2M746 307h1M750 307h1M370 308h1M425 308h1M746 308h1M748 308h1M750 308h1M163 309h1M370 309h1M377 309h1M424 309h1M746 309h5M165 310h1M369 310h1M376 310h1M746 310h1M748 310h1M750 310h1M167 311h1M369 311h1M377 311h1M745 311h1M748 311h1M751 311h1M169 312h1M369 312h1M429 312h1M747 312h3M171 313h1M369 313h1M375 313h1M377 313h1M428 313h1M747 313h1M749 313h1M173 314h1M368 314h1M748 314h1M175 315h1M368 315h1M378 315h1M368 316h1M374 316h1M432 316h2M177 317h1M368 317h1M378 317h1M179 318h1M368 318h1M181 319h1M367 319h1M374 319h1M378 319h1M437 319h1M183 320h1M367 320h1M436 320h1M185 321h1M367 321h1M379 321h1M187 322h1M367 322h1M373 322h1M189 323h1M367 323h1M379 323h1M366 324h1M191 325h1M366 325h1M372 325h1M379 325h1M193 326h1M366 326h1M195 327h1M366 327h1M380 327h1M197 328h1M365 328h1M371 328h1M199 329h1M365 329h1M380 329h1M201 330h1M365 330h1M203 331h1M365 331h1M370 331h1M380 331h1M365 332h1M205 333h1M364 333h1M381 333h1M207 334h1M364 334h1M370 334h1M209 335h1M364 335h1M381 335h1M211 336h1M364 336h1M213 337h1M364 337h1M369 337h1M381 337h1M215 338h1M363 338h1M217 339h1M363 339h1M382 339h1M363 340h1M368 340h1M219 341h1M363 341h1M382 341h1M221 342h1M362 342h1M223 343h1M362 343h1M367 343h1M382 343h1M225 344h1M362 344h1M227 345h1M362 345h1M383 345h1M229 346h1M362 346h1M366 346h1M231 347h1M361 347h1M383 347h1M361 348h1M233 349h1M361 349h1M366 349h1M383 349h1M235 350h1M361 350h1M237 351h1M360 351h1M384 351h1M239 352h1M360 352h1M365 352h1M241 353h1M360 353h1M384 353h1M243 354h1M360 354h1M245 355h1M360 355h1M364 355h1M384 355h1M359 356h1M247 357h1M359 357h1M385 357h1M249 358h1M359 358h1M363 358h1M251 359h1M359 359h1M385 359h1M253 360h1M359 360h1M255 361h1M358 361h1M362 361h1M385 361h1M257 362h1M358 362h1M259 363h1M358 363h1M386 363h1M358 364h1M361 364h1M261 365h1M357 365h1M386 365h1M263 366h1M357 366h1M265 367h1M357 367h1M361 367h1M386 367h1M267 368h1M357 368h1M269 369h1M357 369h1M387 369h1M271 370h1M356 370h1M360 370h1M273 371h1M356 371h1M387 371h1M275 372h1M356 372h1M356 373h1M359 373h1M387 373h1M277 374h1M355 374h1M279 375h1M355 375h1M388 375h1M281 376h1M355 376h1M358 376h1M283 377h1M355 377h1M388 377h1M285 378h1M355 378h1M287 379h1M354 379h1M357 379h1M388 379h1M289 380h1M354 380h1M354 381h1M389 381h1M291 382h1M354 382h1M357 382h1M293 383h1M354 383h1M389 383h1M295 384h1M353 384h1M297 385h1M353 385h1M356 385h1M389 385h1M299 386h1M353 386h1M301 387h1M353 387h1M390 387h1M303 388h1M352 388h1M355 388h1M352 389h1M390 389h1M305 390h1M352 390h1M307 391h1M352 391h1M354 391h1M390 391h1M309 392h1M352 392h1M311 393h1M351 393h1M391 393h1M313 394h1M351 394h1M353 394h1M315 395h1M351 395h1M391 395h1M317 396h1M351 396h1M350 397h1M353 397h1M391 397h1M319 398h1M350 398h1M321 399h1M350 399h1M392 399h1M323 400h1M350 400h1M352 400h1M325 401h1M350 401h1M392 401h1M327 402h1M349 402h1M329 403h1M349 403h1M351 403h1M392 403h1M331 404h1M349 404h1M349 405h1M393 405h1M333 406h1M349 406h2M335 407h1M348 407h1M393 407h1M337 408h1M348 408h1M339 409h1M348 409h2M341 410h1M348 410h1M343 411h1M347 411h1M345 412h1M347 412h2M397 412h1M347 413h1M347 414h1M347 415h3M346 416h1M351 416h1M346 417h1M353 417h1M346 418h2M355 418h1M346 419h1M357 419h1M345 420h1M359 420h1M345 421h2M345 422h1M361 422h1M345 423h1M363 423h1M345 424h1M365 424h1M344 425h1M367 425h1M344 426h1M415 426h5M344 427h1M414 427h1M420 427h1M344 428h1M413 428h1M421 428h1M344 429h1M413 429h1M421 429h1M343 430h2M413 430h1M421 430h1M343 431h1M413 431h1M421 431h1M343 432h1M413 432h1M421 432h1M343 433h1M414 433h1M420 433h1M342 434h1M415 434h5M342 435h1M417 435h1M417 436h1M417 437h1M413 438h9M417 439h1M417 440h1M417 441h1M417 442h1M361 544h1M375 544h1M362 545h1M374 545h1M363 546h11M365 547h1M371 547h1M365 548h1M371 548h1M365 549h1M371 549h1M365 550h1M371 550h1M365 551h1M371 551h1M365 552h1M371 552h1M365 553h1M371 553h1M365 554h1M371 554h1M365 555h1M371 555h1M365 556h1M371 556h1M365 557h1M371 557h1M363 558h11M362 559h1M374 559h1M361 560h1M375 560h1"/>
<path stroke="#ffff00" transform="translate(0,0.5)" d="M108 106h1M114 106h1M118 106h3M107 107h2M113 107h1M115 107h1M117 107h1M121 107h1M106 108h1M108 108h1M113 108h1M116 108h1M122 108h1M108 109h1M112 109h1M117 109h1M122 109h1M108 110h1M112 110h1M118 110h1M122 110h1M108 111h1M112 111h1M119 111h1M121 111h1M108 112h1M112 112h1M120 112h1M108 113h1M112 113h1M121 113h1M108 114h1M112 114h1M122 114h1M109 115h1M111 115h1M122 115h1M110 116h1M122 116h1M745 116h2M750 116h2M110 117h1M122 117h1M744 117h1M747 117h1M749 117h1M752 117h1M110 118h1M122 118h1M744 118h1M747 118h1M749 118h1M752 118h1M110 119h1M122 119h1M745 119h1M747 119h1M749 119h1M751 119h1M110 120h1M122 120h1M748 120h1M121 121h1M748 121h1M120 122h1M748 122h1M748 123h1M748 124h1M273 152h1M747 156h3M746 157h1M750 157h1M270 158h1M272 158h1M274 158h1M745 158h1M751 158h1M268 159h1M745 159h1M751 159h1M745 160h1M751 160h1M746 161h1M750 161h1M744 162h1M746 162h1M750 162h1M745 163h1M751 163h1M752 164h1M750 196h3M751 197h2M750 198h1M752 198h1M745 199h1M749 199h1M746 200h1M748 200h1M747 201h1M746 202h1M748 202h1M745 203h1M749 203h1M744 204h1M544 223h1M548 223h1M552 223h1M545 224h1M547 224h1M549 224h1M551 224h1M553 224h1M546 225h1M550 225h1M554 225h1M558 225h1M546 226h1M550 226h1M554 226h1M557 226h2M546 227h1M550 227h1M554 227h1M556 227h1M558 227h1M546 228h1M550 228h1M554 228h2M558 228h1M546 229h1M550 229h1M554 229h1M558 229h1M546 230h1M550 230h1M554 230h1M558 230h1M546 231h1M550 231h1M554 231h1M558 231h1M546 232h1M550 232h1M554 232h1M558 232h1M546 233h1M550 233h1M554 233h1M558 233h1M546 234h1M550 234h1M554 234h1M558 234h1M546 235h1M550 235h1M554 235h1M558 235h1M546 236h1M550 236h1M555 236h1M557 236h1M546 237h1M550 237h1M556 237h1M555 238h1M557 238h1M554 239h1M558 239h1M747 296h1M745 297h5M747 298h1M747 299h1M749 299h2M747 300h2M751 300h1M747 301h1M751 301h1M747 302h1M750 302h1M747 303h1M750 303h1M751 304h1M475 315h1M475 316h1M471 317h9M475 318h1M475 319h1M475 320h1M475 321h1M479 321h3M475 322h1M478 322h1M482 322h1M441 323h1M475 323h3M483 323h1M447 324h1M475 324h1M483 324h1M475 325h1M483 325h1M475 326h1M482 326h1M475 327h1M481 327h1M475 328h1M481 328h1M475 329h1M481 329h1M482 330h1M483 331h1M225 544h1M237 544h1M226 545h1M236 545h1M226 546h1M236 546h1M227 547h2M234 547h2M229 548h5M227 549h2M234 549h2M226 550h1M236 550h1M226 551h1M236 551h1M225 552h1M237 552h1M225 553h1M237 553h1M225 554h1M237 554h1M225 555h1M237 555h1M225 556h1M237 556h1M226 557h1M236 557h1M226 558h1M236 558h1M227 559h2M234 559h2M229 560h5"/>
<path stroke="#0000ff" transform="translate(0,0.5)" d="M359 38h1M363 38h1M367 38h1M360 39h1M362 39h1M364 39h1M366 39h1M368 39h1M361 40h1M365 40h1M369 40h1M361 41h1M365 41h1M369 41h1M361 42h1M365 42h1M369 42h1M361 43h1M365 43h1M369 43h1M361 44h1M365 44h1M369 44h1M361 45h1M365 45h1M369 45h1M361 46h1M365 46h1M369 46h1M361 47h1M365 47h1M369 47h1M361 48h1M365 48h1M369 48h1M361 49h1M365 49h1M369 49h1M374 49h1M361 50h1M365 50h1M369 50h1M373 50h3M361 51h1M365 51h1M369 51h1M374 51h1M361 52h1M365 52h1M369 52h1M374 52h1M370 53h1M373 53h1M371 54h2M246 118h1M252 118h1M258 118h1M246 119h1M252 119h1M258 119h1M245 120h3M250 120h5M257 120h3M246 121h1M252 121h1M258 121h1M246 122h1M252 122h1M258 122h1M247 123h1M252 123h1M257 123h1M247 124h1M252 124h1M257 124h1M248 125h2M252 125h1M255 125h2M250 126h5M252 127h1M252 128h1M252 129h1M248 130h9M252 131h1M252 132h1M252 133h1M252 134h1M745 136h1M752 136h1M746 137h6M747 138h1M750 138h1M747 139h1M750 139h1M747 140h1M750 140h1M747 141h1M750 141h1M747 142h1M750 142h1M746 143h6M745 144h1M752 144h1M265 153h1M266 160h1M267 163h1M268 166h1M269 169h1M426 171h1M431 171h3M438 171h1M270 172h1M426 172h1M430 172h1M434 172h1M438 172h1M426 173h1M430 173h1M434 173h1M438 173h1M426 174h1M430 174h1M434 174h1M438 174h1M270 175h1M426 175h1M431 175h3M438 175h1M427 176h1M437 176h1M427 177h1M437 177h1M271 178h1M428 178h2M435 178h2M747 178h3M430 179h5M746 179h1M750 179h1M432 180h1M746 180h1M750 180h1M272 181h1M432 181h1M744 181h4M749 181h4M432 182h1M428 183h9M744 183h9M273 184h1M432 184h1M432 185h1M432 186h1M274 187h1M432 187h1M275 190h1M275 193h1M276 196h1M277 199h1M410 199h1M278 202h1M279 205h1M279 208h1M280 211h1M281 214h1M746 216h1M749 216h1M752 216h1M282 217h1M745 217h2M748 217h2M751 217h1M745 218h1M747 218h2M750 218h2M744 219h1M747 219h1M750 219h1M283 220h1M746 221h1M749 221h1M752 221h1M745 222h2M748 222h2M751 222h1M284 223h1M745 223h1M747 223h2M750 223h2M744 224h1M747 224h1M750 224h1M284 226h1M285 229h1M286 232h1M287 235h1M288 238h1M288 241h1M289 244h1M746 246h3M290 247h1M745 247h1M749 247h2M746 248h1M750 248h1M747 249h1M751 249h1M291 250h1M747 250h1M751 250h1M747 251h1M751 251h1M746 252h1M750 252h1M292 253h1M745 253h1M749 253h2M746 254h3M293 256h1M293 259h1M294 262h1M295 265h1M296 268h1M297 271h1M298 274h1M298 277h1M299 280h1M300 283h1M301 286h1M302 289h1M302 292h1M303 295h1M304 298h1M305 301h1M306 304h1M307 307h1M307 310h1M308 313h1M309 316h1M745 316h1M748 316h1M751 316h1M744 317h2M747 317h3M751 317h2M745 318h1M748 318h1M751 318h1M310 319h1M746 319h1M748 319h1M750 319h1M747 320h3M748 321h1M311 322h1M746 322h5M748 323h1M748 324h1M312 325h1M745 326h1M748 326h1M751 326h1M745 327h1M747 327h1M749 327h1M751 327h1M312 328h1M745 328h1M748 328h1M751 328h1M746 329h1M750 329h1M747 330h3M313 331h1M748 331h1M746 332h5M748 333h1M314 334h1M748 334h1M315 337h1M316 340h1M316 343h1M317 346h1M318 349h1M319 352h1M320 355h1M321 358h1M38 359h1M54 359h1M39 360h1M53 360h1M40 361h1M52 361h1M321 361h1M41 362h1M51 362h1M41 363h1M51 363h1M42 364h1M50 364h1M322 364h1M42 365h1M50 365h1M42 366h1M50 366h1M38 367h17M323 367h1M42 368h1M50 368h1M42 369h1M50 369h1M42 370h1M50 370h1M324 370h1M41 371h1M51 371h1M41 372h1M51 372h1M40 373h1M52 373h1M325 373h1M39 374h1M53 374h1M38 375h1M54 375h1M326 376h1M326 379h1M327 382h1M328 385h1M329 388h1M330 391h1M416 392h1M330 394h1M331 397h1M332 400h1M333 403h1M436 403h5M435 404h1M441 404h2M434 405h1M443 405h1M334 406h1M435 406h1M444 406h1M436 407h1M445 407h1M437 408h1M445 408h1M335 409h1M437 409h1M446 409h1M438 410h1M446 410h1M438 411h1M446 411h1M335 412h1M438 412h1M446 412h1M437 413h1M446 413h1M437 414h1M445 414h1M336 415h1M436 415h1M445 415h1M435 416h1M444 416h1M434 417h1M443 417h1M337 418h1M435 418h1M441 418h2M436 419h5M338 421h1M339 424h1M340 427h1M340 430h1M341 433h1M482 477h5M479 478h3M487 478h1M478 479h1M488 479h3M477 480h1M487 480h1M491 480h1M476 481h1M486 481h1M492 481h1M486 482h1M492 482h1M478 483h3M486 483h1M492 483h1M477 484h1M481 484h1M487 484h1M491 484h1M476 485h1M482 485h1M488 485h3M476 486h1M482 486h1M476 487h1M482 487h1M492 487h1M477 488h1M481 488h1M491 488h1M478 489h3M490 489h1M481 490h1M487 490h3M482 491h5"/>
<path stroke="#00ffff" transform="translate(0,0.5)" d="M266 159h2M268 160h3M271 161h3M274 162h4M278 163h3M281 164h3M284 165h3M287 166h3M290 167h3M293 168h4M297 169h3M300 170h3M303 171h3M306 172h3M309 173h3M312 174h3M315 175h4M319 176h3M322 177h3M325 178h3M328 179h3M331 180h3M334 181h4M338 182h3M341 183h3M344 184h3M347 185h3M350 186h3M353 187h3M357 188h3M360 189h3M363 190h3M366 191h3M369 192h3M372 193h3M375 194h4M379 195h3M382 196h3M385 197h3M388 198h3M391 199h3M394 200h4M398 201h3M401 202h3M404 203h1M437 258h1M437 259h1M436 261h1M436 262h1M435 264h1M436 265h1M434 267h1M435 268h1M433 270h1M434 271h1M433 273h1M434 274h1M432 276h1M433 277h1M431 279h1M433 280h1M430 282h1M432 283h1M429 285h1M431 286h1M428 288h1M431 289h1M427 291h1M430 292h1M426 294h1M430 295h1M425 297h1M429 298h1M425 300h1M428 301h1M424 303h1M428 304h1M423 306h1M427 307h1M422 309h1M427 310h1M421 312h1M426 313h1M420 315h1M425 316h1M419 318h1M425 319h1M418 321h1M424 322h1M418 324h1M440 324h1M424 325h1M438 326h1M417 327h1M423 328h1M436 328h2M416 330h1M435 330h1M422 331h1M433 332h1M415 333h1M422 334h1M431 334h1M414 336h1M429 336h2M421 337h1M428 338h1M413 339h1M421 340h1M426 340h1M412 342h1M424 342h1M420 343h1M422 344h2M411 345h1M419 346h1M421 346h1M410 348h1M419 348h1M419 349h1M417 350h1M410 351h1M415 352h2M418 352h1M409 354h1M414 354h1M418 355h1M412 356h1M408 357h1M410 358h1M417 358h1M407 360h3M416 361h1M407 362h1M406 363h1M405 364h1M416 364h1M403 366h1M405 366h1M415 367h1M401 368h2M404 369h1M400 370h1M415 370h1M398 372h1M403 372h1M414 373h1M396 374h1M402 375h1M394 376h2M413 376h1M393 378h1M402 378h1M413 379h1M391 380h1M401 381h1M389 382h1M412 382h1M387 384h2M400 384h1M412 385h1M386 386h1M399 387h1M384 388h1M411 388h1M382 390h1M398 390h1M380 392h2M397 393h1M379 394h1M377 396h1M396 396h1M375 398h1M395 399h1M373 400h2M372 402h1M394 402h1M370 404h1M394 405h1M368 406h1M366 408h2M365 410h1M363 412h1M361 414h1M359 416h2M358 418h1M356 420h1M354 422h1M352 424h2M351 426h1M349 428h1M347 430h1M345 432h2M344 434h1M342 436h1"/>
<path stroke="#ffffff" transform="translate(0,0.5)" d="M285 15h28M275 16h10M299 16h1M313 16h10M265 17h10M299 17h1M323 17h10M255 18h10M299 18h1M333 18h10M248 19h7M299 19h1M343 19h8M243 20h5M299 20h1M351 20h5M238 21h5M299 21h1M356 21h5M234 22h4M299 22h1M361 22h4M230 23h4M299 23h1M365 23h4M226 24h4M299 24h1M369 24h3M223 25h3M299 25h1M372 25h4M220 26h3M299 26h1M376 26h3M217 27h3M299 27h1M379 27h3M214 28h3M299 28h1M382 28h3M211 29h3M299 29h1M385 29h3M207 30h4M299 30h1M388 30h3M204 31h3M299 31h1M391 31h4M201 32h3M299 32h1M395 32h3M199 33h2M299 33h1M398 33h2M197 34h2M299 34h1M400 34h2M195 35h2M299 35h1M402 35h2M192 36h3M299 36h1M404 36h3M190 37h2M299 37h1M407 37h2M188 38h2M299 38h1M409 38h2M186 39h2M299 39h1M411 39h2M183 40h3M299 40h1M413 40h3M181 41h2M299 41h1M416 41h2M179 42h2M299 42h1M418 42h2M177 43h2M299 43h1M420 43h2M174 44h3M299 44h1M422 44h3M172 45h2M299 45h1M425 45h2M170 46h2M299 46h1M427 46h2M168 47h2M299 47h1M429 47h2M166 48h2M299 48h1M431 48h2M164 49h2M299 49h1M433 49h2M162 50h2M299 50h1M435 50h2M160 51h2M299 51h1M437 51h2M158 52h2M299 52h1M439 52h2M157 53h1M299 53h1M441 53h1M155 54h2M158 54h1M299 54h1M440 54h1M442 54h2M153 55h2M159 55h1M299 55h1M439 55h1M444 55h1M152 56h1M159 56h1M299 56h1M439 56h1M445 56h2M150 57h2M160 57h1M299 57h1M438 57h1M447 57h2M149 58h1M160 58h1M299 58h1M438 58h1M449 58h1M147 59h2M161 59h1M299 59h1M437 59h1M450 59h2M146 60h1M161 60h1M287 60h24M437 60h1M452 60h1M144 61h2M162 61h1M270 61h17M299 61h1M311 61h17M436 61h1M453 61h2M143 62h1M163 62h1M264 62h6M279 62h1M299 62h1M319 62h1M328 62h6M435 62h1M455 62h1M141 63h2M163 63h1M260 63h4M279 63h1M299 63h1M319 63h1M334 63h4M435 63h1M456 63h2M140 64h1M164 64h1M254 64h6M279 64h1M299 64h1M319 64h1M338 64h6M434 64h1M458 64h1M138 65h2M164 65h1M248 65h6M258 65h1M279 65h1M299 65h1M319 65h1M340 65h1M344 65h6M434 65h1M459 65h2M136 66h2M165 66h1M244 66h4M258 66h1M279 66h1M299 66h1M319 66h1M340 66h1M350 66h4M433 66h1M461 66h1M135 67h1M165 67h1M240 67h4M258 67h1M279 67h1M299 67h1M319 67h1M340 67h1M354 67h5M433 67h1M462 67h2M133 68h2M166 68h1M236 68h4M259 68h1M280 68h1M299 68h1M318 68h1M339 68h1M359 68h4M432 68h1M464 68h2M132 69h1M167 69h1M232 69h4M238 69h1M259 69h1M280 69h1M299 69h1M318 69h1M339 69h1M360 69h1M363 69h4M431 69h1M466 69h1M130 70h2M167 70h1M229 70h3M238 70h1M259 70h1M280 70h1M299 70h1M318 70h1M339 70h1M360 70h1M367 70h2M431 70h1M467 70h1M129 71h1M168 71h1M227 71h2M238 71h1M259 71h1M280 71h1M299 71h1M318 71h1M339 71h1M360 71h1M369 71h3M430 71h1M468 71h2M128 72h1M168 72h1M224 72h3M239 72h1M259 72h1M280 72h1M299 72h1M318 72h1M339 72h1M359 72h1M372 72h3M430 72h1M470 72h1M126 73h2M169 73h1M220 73h4M239 73h1M259 73h1M280 73h1M299 73h1M318 73h1M339 73h1M359 73h1M375 73h4M429 73h1M471 73h1M125 74h1M169 74h1M217 74h3M239 74h1M259 74h1M280 74h1M299 74h1M318 74h1M339 74h1M359 74h1M379 74h3M429 74h1M472 74h2M124 75h1M170 75h1M214 75h3M218 75h1M239 75h1M260 75h1M280 75h1M288 75h22M318 75h1M338 75h1M359 75h1M380 75h1M382 75h2M428 75h1M474 75h1M123 76h1M170 76h1M212 76h2M218 76h1M240 76h1M260 76h1M272 76h16M299 76h1M310 76h16M338 76h1M358 76h1M380 76h1M384 76h3M428 76h1M475 76h1M122 77h1M171 77h1M209 77h3M219 77h1M240 77h1M260 77h1M265 77h7M299 77h1M326 77h8M338 77h1M358 77h1M379 77h1M387 77h2M427 77h1M476 77h1M121 78h1M172 78h1M207 78h2M219 78h1M240 78h1M259 78h6M299 78h1M334 78h5M358 78h1M379 78h1M389 78h2M426 78h1M477 78h1M120 79h1M172 79h1M205 79h2M219 79h1M240 79h1M255 79h4M299 79h1M339 79h4M358 79h1M379 79h1M391 79h2M426 79h1M478 79h1M119 80h1M173 80h1M203 80h2M220 80h1M241 80h1M251 80h4M299 80h1M343 80h4M357 80h1M378 80h1M393 80h2M425 80h1M479 80h1M118 81h1M173 81h1M201 81h2M220 81h1M241 81h1M247 81h4M299 81h1M347 81h4M357 81h1M378 81h1M395 81h3M425 81h1M480 81h1M117 82h1M174 82h1M199 82h2M220 82h1M241 82h1M244 82h3M299 82h1M351 82h4M357 82h1M378 82h1M398 82h2M424 82h1M481 82h1M115 83h2M174 83h1M197 83h3M220 83h1M240 83h4M299 83h1M355 83h4M378 83h1M399 83h3M424 83h1M482 83h1M114 84h1M175 84h1M194 84h3M199 84h1M221 84h1M236 84h4M299 84h1M359 84h3M377 84h1M399 84h1M402 84h2M423 84h1M483 84h2M113 85h1M176 85h1M192 85h2M200 85h1M221 85h1M232 85h4M299 85h1M362 85h4M377 85h1M398 85h1M404 85h2M422 85h1M485 85h1M111 86h2M176 86h1M190 86h2M200 86h1M221 86h1M229 86h3M299 86h1M366 86h4M377 86h1M398 86h1M406 86h2M422 86h1M486 86h1M110 87h1M177 87h1M188 87h2M201 87h1M222 87h1M227 87h2M299 87h1M370 87h2M376 87h1M397 87h1M408 87h2M421 87h1M487 87h2M109 88h1M177 88h1M187 88h1M201 88h1M222 88h1M225 88h2M299 88h1M372 88h2M376 88h1M397 88h1M410 88h2M421 88h1M489 88h1M108 89h1M178 89h1M185 89h2M202 89h1M221 89h4M299 89h1M374 89h3M396 89h1M412 89h2M420 89h1M490 89h1M107 90h1M178 90h1M183 90h2M202 90h1M217 90h4M299 90h1M377 90h4M396 90h1M414 90h2M420 90h1M491 90h1M106 91h1M179 91h1M181 91h2M202 91h1M214 91h3M299 91h1M381 91h4M396 91h1M416 91h2M419 91h1M492 91h1M105 92h1M180 92h1M203 92h1M212 92h2M299 92h1M385 92h2M395 92h1M418 92h1M493 92h1M104 93h1M178 93h3M203 93h1M210 93h2M299 93h1M387 93h2M395 93h1M418 93h3M494 93h1M103 94h1M176 94h2M181 94h1M204 94h1M208 94h2M299 94h1M389 94h2M394 94h1M417 94h1M421 94h2M495 94h1M102 95h1M174 95h2M181 95h1M204 95h1M206 95h2M299 95h1M391 95h2M394 95h1M417 95h1M423 95h2M496 95h1M101 96h1M173 96h1M182 96h1M204 96h2M299 96h1M393 96h2M416 96h1M425 96h1M497 96h1M100 97h1M171 97h2M183 97h1M202 97h2M299 97h1M395 97h2M415 97h1M426 97h2M498 97h1M99 98h1M170 98h1M183 98h1M200 98h2M299 98h1M397 98h2M415 98h1M428 98h1M499 98h1M98 99h1M169 99h1M184 99h1M198 99h2M299 99h1M399 99h2M414 99h1M429 99h1M500 99h1M97 100h1M167 100h2M184 100h1M196 100h2M299 100h1M401 100h2M414 100h1M430 100h2M501 100h1M96 101h1M166 101h1M185 101h1M194 101h2M299 101h1M403 101h2M413 101h1M432 101h1M502 101h1M95 102h1M164 102h2M186 102h1M192 102h2M299 102h1M405 102h2M412 102h1M433 102h2M503 102h1M94 103h1M163 103h1M186 103h1M190 103h2M299 103h1M407 103h2M412 103h1M435 103h1M504 103h1M93 104h1M162 104h1M187 104h3M299 104h1M409 104h3M436 104h1M505 104h1M92 105h1M160 105h2M163 105h1M187 105h1M283 105h33M411 105h1M435 105h1M437 105h2M506 105h1M91 106h1M159 106h1M163 106h1M185 106h2M188 106h1M276 106h7M316 106h7M410 106h1M412 106h2M435 106h1M439 106h1M507 106h1M90 107h1M157 107h2M164 107h1M184 107h1M188 107h1M269 107h7M323 107h6M410 107h1M414 107h1M434 107h1M440 107h2M508 107h1M89 108h1M156 108h1M165 108h1M182 108h2M189 108h1M263 108h6M329 108h7M409 108h1M415 108h2M433 108h1M442 108h1M509 108h1M88 109h1M155 109h1M166 109h1M181 109h1M189 109h1M258 109h5M336 109h5M409 109h1M417 109h1M432 109h1M443 109h1M510 109h1M87 110h1M153 110h2M166 110h1M179 110h2M190 110h1M254 110h4M341 110h4M408 110h1M418 110h2M432 110h1M444 110h2M511 110h1M86 111h1M152 111h1M167 111h1M177 111h2M191 111h1M251 111h3M345 111h3M407 111h1M420 111h2M431 111h1M446 111h1M512 111h1M86 112h1M151 112h1M168 112h1M175 112h2M191 112h1M248 112h3M348 112h3M407 112h1M422 112h2M430 112h1M447 112h1M512 112h1M85 113h1M149 113h2M169 113h1M174 113h1M192 113h1M245 113h3M351 113h3M406 113h1M424 113h1M429 113h1M448 113h1M513 113h1M84 114h1M148 114h1M169 114h1M173 114h1M192 114h1M241 114h4M354 114h4M406 114h1M425 114h1M429 114h1M449 114h2M514 114h1M83 115h1M147 115h1M170 115h3M193 115h1M238 115h3M358 115h3M405 115h1M426 115h1M428 115h1M451 115h1M515 115h1M83 116h1M146 116h1M170 116h1M194 116h1M235 116h3M361 116h3M404 116h1M427 116h2M452 116h1M515 116h1M82 117h1M145 117h1M147 117h1M169 117h1M194 117h1M232 117h3M364 117h3M404 117h1M429 117h1M451 117h1M453 117h1M516 117h1M81 118h1M144 118h1M148 118h1M168 118h1M195 118h1M229 118h3M367 118h3M403 118h1M430 118h1M450 118h1M454 118h1M517 118h1M80 119h1M142 119h2M148 119h1M166 119h2M195 119h1M226 119h3M370 119h3M403 119h1M431 119h2M450 119h1M455 119h2M518 119h1M79 120h1M141 120h1M149 120h1M165 120h1M196 120h1M224 120h2M373 120h2M402 120h1M433 120h1M449 120h1M457 120h1M519 120h1M78 121h1M140 121h1M150 121h1M164 121h1M197 121h1M222 121h2M375 121h2M401 121h1M434 121h1M448 121h1M458 121h1M520 121h1M77 122h1M139 122h1M151 122h1M162 122h2M197 122h1M219 122h3M377 122h2M401 122h1M435 122h2M447 122h1M459 122h1M521 122h1M76 123h1M138 123h1M152 123h1M161 123h1M198 123h1M217 123h2M379 123h2M400 123h1M437 123h1M446 123h1M460 123h1M522 123h1M75 124h1M136 124h2M153 124h1M160 124h1M198 124h1M215 124h2M381 124h2M400 124h1M438 124h1M445 124h1M461 124h1M523 124h1M74 125h1M135 125h1M153 125h1M158 125h2M199 125h1M213 125h2M383 125h2M399 125h1M439 125h1M445 125h1M462 125h2M524 125h1M73 126h1M134 126h1M154 126h1M157 126h1M200 126h1M211 126h2M385 126h2M398 126h1M440 126h2M444 126h1M464 126h1M525 126h1M73 127h1M133 127h1M155 127h2M200 127h1M209 127h2M387 127h2M398 127h1M442 127h2M465 127h1M525 127h1M72 128h1M132 128h1M155 128h1M201 128h1M207 128h2M389 128h2M397 128h1M443 128h1M466 128h1M526 128h1M71 129h1M131 129h1M154 129h1M201 129h1M205 129h2M391 129h2M397 129h1M444 129h1M467 129h1M527 129h1M70 130h1M130 130h1M152 130h2M202 130h3M393 130h2M396 130h1M445 130h1M468 130h1M528 130h1M70 131h1M129 131h1M131 131h1M151 131h1M395 131h1M446 131h2M467 131h1M469 131h1M528 131h1M69 132h1M128 132h1M132 132h1M150 132h1M200 132h2M397 132h2M448 132h1M466 132h1M470 132h1M529 132h1M68 133h1M127 133h1M133 133h1M149 133h1M199 133h1M399 133h1M449 133h1M465 133h1M471 133h1M530 133h1M68 134h1M126 134h1M134 134h1M148 134h1M197 134h2M272 134h1M400 134h2M450 134h1M464 134h1M472 134h1M530 134h1M67 135h1M125 135h1M135 135h1M147 135h1M196 135h1M272 135h1M402 135h1M451 135h1M463 135h1M473 135h1M531 135h1M66 136h1M124 136h1M136 136h1M146 136h1M194 136h2M272 136h1M403 136h2M452 136h1M462 136h1M474 136h1M532 136h1M66 137h1M124 137h1M137 137h1M145 137h1M192 137h2M272 137h1M405 137h2M453 137h1M461 137h1M474 137h1M532 137h1M65 138h1M123 138h1M138 138h1M144 138h1M191 138h1M272 138h1M407 138h1M454 138h1M460 138h1M475 138h1M533 138h1M65 139h1M122 139h1M139 139h1M143 139h1M189 139h2M272 139h1M408 139h2M455 139h1M459 139h1M476 139h1M533 139h1M64 140h1M121 140h1M140 140h1M142 140h1M188 140h1M272 140h1M410 140h1M456 140h1M458 140h1M477 140h1M534 140h1M63 141h1M120 141h1M141 141h1M186 141h2M272 141h1M411 141h2M457 141h1M478 141h1M535 141h1M63 142h1M119 142h1M140 142h1M185 142h1M272 142h1M413 142h1M458 142h1M479 142h1M535 142h1M62 143h1M119 143h1M139 143h1M184 143h1M272 143h1M414 143h1M459 143h1M479 143h1M536 143h1M61 144h1M118 144h1M138 144h1M182 144h2M272 144h1M362 144h1M415 144h2M460 144h1M480 144h1M537 144h1M61 145h1M117 145h1M137 145h1M181 145h1M272 145h1M362 145h1M417 145h1M461 145h1M481 145h1M537 145h1M60 146h1M116 146h1M136 146h1M180 146h1M272 146h1M361 146h1M418 146h1M462 146h1M482 146h1M538 146h1M59 147h1M115 147h1M117 147h1M135 147h1M179 147h1M361 147h1M419 147h1M463 147h1M481 147h1M483 147h1M539 147h1M59 148h1M114 148h1M118 148h2M134 148h1M177 148h2M360 148h1M420 148h1M464 148h1M479 148h2M484 148h1M539 148h1M58 149h1M113 149h1M120 149h1M133 149h1M176 149h1M360 149h1M421 149h2M465 149h1M478 149h1M485 149h1M540 149h1M57 150h1M113 150h1M121 150h1M132 150h1M175 150h1M359 150h1M423 150h1M466 150h1M477 150h1M485 150h1M541 150h1M57 151h1M112 151h1M122 151h1M131 151h1M174 151h1M359 151h1M424 151h1M467 151h1M476 151h1M486 151h1M541 151h1M56 152h1M111 152h1M123 152h1M130 152h1M173 152h1M358 152h1M425 152h1M468 152h1M475 152h1M487 152h1M542 152h1M55 153h1M110 153h1M124 153h2M130 153h1M171 153h2M358 153h1M426 153h2M468 153h1M473 153h2M488 153h1M543 153h1M55 154h1M110 154h1M126 154h1M129 154h1M170 154h1M357 154h1M428 154h1M469 154h1M472 154h1M488 154h1M543 154h1M54 155h1M109 155h1M127 155h2M169 155h1M357 155h1M429 155h1M470 155h2M489 155h1M544 155h1M54 156h1M108 156h1M127 156h1M168 156h1M430 156h1M471 156h1M490 156h1M544 156h1M53 157h1M107 157h1M126 157h1M167 157h1M431 157h1M472 157h1M491 157h1M545 157h1M52 158h1M54 158h1M107 158h1M125 158h1M166 158h1M432 158h1M473 158h1M491 158h1M544 158h1M546 158h1M52 159h1M55 159h2M106 159h1M125 159h1M165 159h1M433 159h1M473 159h1M492 159h1M542 159h2M546 159h1M51 160h1M57 160h2M105 160h1M124 160h1M164 160h1M434 160h1M474 160h1M493 160h1M540 160h2M547 160h1M51 161h1M59 161h2M105 161h1M123 161h1M163 161h1M435 161h1M475 161h1M493 161h1M538 161h2M547 161h1M50 162h1M61 162h1M104 162h1M122 162h1M162 162h1M436 162h1M476 162h1M494 162h1M537 162h1M548 162h1M50 163h1M62 163h2M103 163h1M105 163h2M122 163h1M161 163h1M437 163h1M476 163h1M492 163h2M495 163h1M535 163h2M548 163h1M49 164h1M64 164h2M102 164h1M107 164h1M121 164h1M160 164h1M438 164h1M477 164h1M491 164h1M496 164h1M533 164h2M549 164h1M49 165h1M66 165h2M102 165h1M108 165h1M120 165h1M159 165h1M439 165h1M478 165h1M490 165h1M496 165h1M531 165h2M549 165h1M48 166h1M68 166h1M101 166h1M109 166h2M119 166h1M158 166h1M440 166h1M479 166h1M488 166h2M497 166h1M530 166h1M550 166h1M48 167h1M69 167h2M100 167h1M111 167h1M119 167h1M157 167h1M441 167h1M479 167h1M487 167h1M498 167h1M528 167h2M550 167h1M47 168h1M71 168h2M100 168h1M112 168h1M118 168h1M156 168h1M442 168h1M480 168h1M486 168h1M498 168h1M526 168h2M551 168h1M47 169h1M73 169h2M99 169h1M113 169h2M117 169h1M155 169h1M443 169h1M481 169h1M484 169h2M499 169h1M524 169h2M551 169h1M46 170h1M75 170h2M98 170h1M115 170h2M154 170h1M444 170h1M482 170h2M500 170h1M522 170h2M552 170h1M46 171h1M77 171h1M97 171h1M115 171h1M153 171h1M445 171h1M483 171h1M501 171h1M521 171h1M552 171h1M45 172h1M78 172h2M97 172h1M115 172h1M153 172h1M445 172h1M483 172h1M501 172h1M519 172h2M553 172h1M45 173h1M80 173h2M96 173h1M114 173h1M152 173h1M446 173h1M484 173h1M502 173h1M517 173h2M553 173h1M44 174h1M82 174h2M95 174h1M113 174h1M151 174h1M447 174h1M485 174h1M503 174h1M515 174h2M554 174h1M44 175h1M84 175h1M95 175h1M112 175h1M150 175h1M448 175h1M486 175h1M503 175h1M514 175h1M554 175h1M44 176h1M85 176h2M94 176h1M112 176h1M149 176h1M449 176h1M486 176h1M504 176h1M512 176h2M554 176h1M43 177h1M87 177h2M94 177h1M111 177h1M148 177h1M450 177h1M487 177h1M504 177h1M510 177h2M555 177h1M43 178h1M89 178h2M93 178h1M111 178h1M148 178h1M450 178h1M487 178h1M505 178h1M508 178h2M555 178h1M42 179h1M91 179h1M93 179h1M110 179h1M147 179h1M451 179h1M488 179h1M505 179h1M507 179h1M556 179h1M42 180h1M92 180h2M110 180h1M146 180h1M452 180h1M488 180h1M505 180h2M556 180h1M41 181h1M91 181h1M94 181h2M109 181h1M145 181h1M453 181h1M489 181h1M503 181h2M507 181h1M557 181h1M41 182h1M91 182h1M96 182h1M108 182h1M144 182h1M454 182h1M490 182h1M502 182h1M507 182h1M557 182h1M40 183h1M90 183h1M97 183h2M108 183h1M144 183h1M454 183h1M490 183h1M500 183h2M508 183h1M558 183h1M40 184h1M90 184h1M99 184h2M107 184h1M143 184h1M455 184h1M491 184h1M498 184h2M508 184h1M558 184h1M40 185h1M89 185h1M101 185h1M106 185h1M142 185h1M456 185h1M492 185h1M497 185h1M509 185h1M558 185h1M39 186h1M89 186h1M102 186h2M106 186h1M141 186h1M457 186h1M492 186h1M495 186h2M509 186h1M559 186h1M39 187h1M88 187h1M104 187h2M141 187h1M424 187h1M457 187h1M493 187h2M510 187h1M559 187h1M38 188h1M87 188h1M104 188h1M106 188h2M140 188h1M423 188h1M458 188h1M491 188h2M494 188h1M511 188h1M560 188h1M38 189h1M87 189h1M104 189h1M108 189h2M139 189h1M421 189h2M459 189h1M489 189h2M494 189h1M511 189h1M560 189h1M37 190h1M86 190h1M103 190h1M110 190h1M139 190h1M420 190h1M459 190h1M488 190h1M495 190h1M512 190h1M561 190h1M37 191h1M86 191h1M103 191h1M111 191h2M138 191h1M419 191h1M460 191h1M486 191h2M495 191h1M512 191h1M561 191h1M36 192h1M85 192h1M102 192h1M113 192h2M137 192h1M418 192h1M461 192h1M484 192h2M496 192h1M513 192h1M562 192h1M36 193h1M85 193h1M102 193h1M115 193h1M137 193h1M416 193h2M461 193h1M483 193h1M496 193h1M513 193h1M562 193h1M36 194h1M84 194h1M101 194h1M116 194h2M136 194h1M415 194h1M462 194h1M481 194h2M497 194h1M514 194h1M562 194h1M35 195h1M84 195h1M101 195h1M118 195h2M136 195h1M414 195h1M462 195h1M479 195h2M497 195h1M514 195h1M563 195h1M35 196h1M84 196h1M100 196h1M120 196h1M135 196h1M463 196h1M478 196h1M498 196h1M514 196h1M563 196h1M34 197h1M83 197h1M100 197h1M121 197h2M134 197h1M464 197h1M476 197h2M498 197h1M515 197h1M564 197h1M34 198h1M83 198h1M99 198h1M123 198h2M134 198h1M464 198h1M474 198h2M499 198h1M515 198h1M564 198h1M33 199h1M82 199h3M99 199h1M125 199h1M133 199h1M465 199h1M473 199h1M499 199h1M514 199h3M565 199h1M33 200h1M82 200h1M85 200h2M98 200h1M126 200h2M132 200h1M466 200h1M471 200h2M500 200h1M512 200h2M516 200h1M565 200h1M32 201h1M81 201h1M87 201h2M98 201h1M128 201h2M132 201h1M466 201h1M469 201h2M500 201h1M509 201h3M517 201h1M566 201h1M32 202h1M81 202h1M89 202h3M97 202h1M130 202h1M468 202h1M501 202h1M507 202h2M517 202h1M566 202h1M32 203h1M80 203h1M92 203h2M97 203h1M130 203h1M468 203h1M501 203h1M505 203h2M518 203h1M566 203h1M31 204h1M80 204h1M94 204h3M130 204h1M468 204h1M502 204h3M518 204h1M567 204h1M31 205h1M79 205h1M96 205h1M129 205h1M469 205h1M502 205h1M519 205h1M567 205h1M31 206h1M79 206h1M95 206h1M129 206h1M469 206h1M503 206h1M519 206h1M567 206h1M30 207h1M78 207h1M95 207h1M128 207h1M470 207h1M503 207h1M520 207h1M568 207h1M30 208h1M78 208h1M94 208h1M128 208h1M470 208h1M504 208h1M520 208h1M568 208h1M30 209h1M77 209h1M94 209h1M127 209h1M471 209h1M504 209h1M521 209h1M568 209h1M30 210h1M77 210h1M93 210h1M127 210h1M471 210h1M505 210h1M521 210h1M568 210h1M29 211h1M77 211h1M93 211h1M126 211h1M472 211h1M505 211h1M521 211h1M569 211h1M29 212h1M76 212h1M92 212h1M126 212h1M472 212h1M506 212h1M522 212h1M569 212h1M29 213h1M76 213h1M92 213h1M125 213h1M473 213h1M506 213h1M522 213h1M569 213h1M28 214h1M75 214h1M91 214h1M125 214h1M473 214h1M507 214h1M523 214h1M570 214h1M28 215h1M75 215h1M91 215h1M124 215h1M474 215h1M507 215h1M523 215h1M570 215h1M28 216h1M75 216h1M91 216h1M124 216h1M474 216h1M507 216h1M523 216h1M570 216h1M27 217h1M74 217h1M90 217h1M123 217h1M475 217h1M508 217h1M524 217h1M571 217h1M27 218h1M74 218h3M90 218h1M123 218h1M475 218h1M508 218h1M522 218h3M571 218h1M27 219h1M74 219h1M77 219h3M90 219h1M122 219h1M476 219h1M508 219h1M519 219h3M524 219h1M571 219h1M26 220h1M73 220h1M80 220h4M90 220h1M122 220h1M476 220h1M508 220h1M515 220h4M525 220h1M572 220h1M26 221h1M73 221h1M84 221h3M89 221h1M122 221h1M476 221h1M509 221h1M512 221h3M525 221h1M572 221h1M26 222h1M73 222h1M87 222h3M121 222h1M477 222h1M509 222h3M525 222h1M572 222h1M25 223h1M73 223h1M89 223h1M121 223h1M477 223h1M509 223h1M525 223h1M573 223h1M25 224h1M72 224h1M89 224h1M120 224h1M478 224h1M509 224h1M526 224h1M573 224h1M25 225h1M72 225h1M88 225h1M120 225h1M478 225h1M510 225h1M526 225h1M573 225h1M24 226h1M72 226h1M88 226h1M119 226h1M479 226h1M510 226h1M526 226h1M574 226h1M24 227h1M71 227h1M87 227h1M119 227h1M479 227h1M511 227h1M527 227h1M574 227h1M24 228h1M71 228h1M87 228h1M119 228h1M479 228h1M511 228h1M527 228h1M574 228h1M24 229h1M70 229h1M86 229h1M118 229h1M480 229h1M512 229h1M528 229h1M574 229h1M23 230h1M70 230h1M86 230h1M118 230h1M480 230h1M512 230h1M528 230h1M575 230h1M23 231h1M70 231h1M86 231h1M118 231h1M480 231h1M512 231h1M528 231h1M575 231h1M23 232h1M69 232h1M85 232h1M117 232h1M481 232h1M513 232h1M529 232h1M575 232h1M23 233h1M69 233h1M85 233h1M117 233h1M481 233h1M513 233h1M529 233h1M575 233h1M22 234h1M69 234h1M85 234h1M117 234h1M481 234h1M513 234h1M529 234h1M576 234h1M22 235h1M69 235h1M85 235h1M116 235h1M482 235h1M513 235h1M529 235h1M576 235h1M22 236h1M68 236h1M84 236h1M116 236h1M482 236h1M514 236h1M530 236h1M576 236h1M22 237h1M68 237h1M84 237h1M116 237h1M482 237h1M514 237h1M530 237h1M576 237h1M21 238h1M68 238h4M84 238h1M115 238h1M483 238h1M514 238h1M527 238h4M577 238h1M21 239h1M68 239h1M72 239h4M84 239h1M115 239h1M483 239h1M514 239h1M523 239h4M530 239h1M577 239h1M21 240h1M67 240h1M76 240h4M83 240h1M115 240h1M483 240h1M515 240h1M519 240h4M531 240h1M577 240h1M21 241h1M67 241h1M80 241h4M114 241h1M484 241h1M515 241h4M531 241h1M577 241h1M21 242h1M67 242h1M83 242h1M114 242h1M484 242h1M515 242h1M531 242h1M577 242h1M20 243h1M67 243h1M83 243h1M114 243h1M484 243h1M515 243h1M531 243h1M578 243h1M20 244h1M66 244h1M82 244h1M114 244h1M484 244h1M516 244h1M532 244h1M578 244h1M20 245h1M66 245h1M82 245h1M113 245h1M485 245h1M516 245h1M532 245h1M578 245h1M20 246h1M66 246h1M82 246h1M113 246h1M485 246h1M516 246h1M532 246h1M578 246h1M20 247h1M66 247h1M81 247h1M113 247h1M485 247h1M517 247h1M532 247h1M578 247h1M19 248h1M65 248h1M81 248h1M112 248h1M486 248h1M517 248h1M533 248h1M579 248h1M19 249h1M65 249h1M81 249h1M112 249h1M486 249h1M517 249h1M533 249h1M579 249h1M19 250h1M65 250h1M81 250h1M112 250h1M486 250h1M517 250h1M533 250h1M579 250h1M19 251h1M65 251h1M80 251h1M111 251h1M459 251h2M487 251h1M518 251h1M533 251h1M579 251h1M19 252h1M65 252h1M80 252h1M111 252h1M456 252h3M487 252h1M518 252h1M533 252h1M579 252h1M19 253h1M65 253h1M80 253h1M111 253h1M453 253h3M487 253h1M518 253h1M533 253h1M579 253h1M19 254h1M64 254h1M80 254h1M110 254h1M450 254h3M488 254h1M518 254h1M534 254h1M579 254h1M18 255h1M64 255h1M79 255h1M110 255h1M448 255h2M488 255h1M519 255h1M534 255h1M580 255h1M18 256h1M64 256h1M79 256h1M110 256h1M488 256h1M519 256h1M534 256h1M580 256h1M18 257h1M64 257h1M79 257h1M110 257h1M488 257h1M519 257h1M534 257h1M580 257h1M18 258h1M64 258h4M79 258h1M109 258h1M489 258h1M519 258h1M531 258h4M580 258h1M18 259h1M64 259h1M68 259h7M78 259h1M109 259h1M489 259h1M520 259h1M524 259h7M534 259h1M580 259h1M18 260h1M63 260h1M75 260h4M109 260h1M489 260h1M520 260h4M535 260h1M580 260h1M18 261h1M63 261h1M78 261h1M109 261h1M489 261h1M520 261h1M535 261h1M580 261h1M18 262h1M63 262h1M78 262h1M109 262h1M489 262h1M520 262h1M535 262h1M580 262h1M18 263h1M63 263h1M78 263h1M108 263h1M490 263h1M520 263h1M535 263h1M580 263h1M18 264h1M62 264h1M78 264h1M108 264h1M490 264h1M520 264h1M536 264h1M580 264h1M17 265h1M62 265h1M77 265h1M108 265h1M490 265h1M521 265h1M536 265h1M581 265h1M17 266h1M62 266h1M77 266h1M108 266h1M490 266h1M521 266h1M536 266h1M581 266h1M17 267h1M62 267h1M77 267h1M108 267h1M490 267h1M521 267h1M536 267h1M581 267h1M17 268h1M62 268h1M77 268h1M108 268h1M490 268h1M521 268h1M536 268h1M581 268h1M17 269h1M62 269h1M77 269h1M107 269h1M491 269h1M521 269h1M536 269h1M581 269h1M17 270h1M61 270h1M77 270h1M107 270h1M491 270h1M521 270h1M537 270h1M581 270h1M17 271h1M61 271h1M77 271h1M107 271h1M491 271h1M521 271h1M537 271h1M581 271h1M17 272h1M61 272h1M76 272h1M107 272h1M491 272h1M522 272h1M537 272h1M581 272h1M17 273h1M61 273h1M76 273h1M107 273h1M491 273h1M522 273h1M537 273h1M581 273h1M17 274h1M61 274h1M76 274h1M107 274h1M491 274h1M522 274h1M537 274h1M581 274h1M16 275h1M61 275h1M76 275h1M107 275h1M491 275h1M522 275h1M537 275h1M582 275h1M16 276h1M61 276h1M76 276h1M106 276h1M492 276h1M522 276h1M537 276h1M582 276h1M16 277h1M61 277h1M76 277h1M106 277h1M492 277h1M522 277h1M537 277h1M582 277h1M16 278h1M61 278h1M76 278h1M106 278h1M492 278h1M522 278h1M537 278h1M582 278h1M16 279h1M61 279h7M76 279h1M106 279h1M492 279h1M522 279h1M530 279h8M582 279h1M16 280h1M61 280h1M68 280h9M106 280h1M492 280h1M522 280h8M537 280h1M582 280h1M16 281h1M61 281h1M76 281h1M106 281h1M492 281h1M522 281h1M537 281h1M582 281h1M16 282h1M61 282h1M76 282h1M106 282h1M492 282h1M522 282h1M537 282h1M582 282h1M16 283h1M61 283h1M76 283h1M105 283h1M493 283h1M522 283h1M537 283h1M582 283h1M16 284h1M61 284h1M76 284h1M105 284h1M493 284h1M522 284h1M537 284h1M582 284h1M15 285h1M61 285h1M76 285h1M105 285h1M493 285h1M522 285h1M537 285h1M583 285h1M15 286h1M61 286h1M76 286h1M105 286h1M493 286h1M522 286h1M537 286h1M583 286h1M15 287h1M60 287h1M76 287h1M105 287h1M493 287h1M522 287h1M538 287h1M583 287h1M15 288h1M60 288h1M75 288h1M105 288h1M493 288h1M523 288h1M538 288h1M583 288h1M15 289h1M60 289h1M75 289h1M105 289h1M493 289h1M523 289h1M538 289h1M583 289h1M15 290h1M60 290h1M75 290h1M105 290h1M493 290h1M523 290h1M538 290h1M583 290h1M15 291h1M60 291h1M75 291h1M105 291h1M493 291h1M523 291h1M538 291h1M583 291h1M15 292h1M60 292h1M75 292h1M105 292h1M493 292h1M523 292h1M538 292h1M583 292h1M15 293h1M60 293h1M75 293h1M105 293h1M493 293h1M523 293h1M538 293h1M583 293h1M15 294h1M60 294h1M75 294h1M105 294h1M493 294h1M523 294h1M538 294h1M583 294h1M15 295h1M60 295h1M75 295h1M105 295h1M493 295h1M523 295h1M538 295h1M583 295h1M15 296h1M60 296h1M75 296h1M105 296h1M493 296h1M523 296h1M538 296h1M583 296h1M15 297h1M60 297h1M75 297h1M105 297h1M493 297h1M523 297h1M538 297h1M583 297h1M15 298h1M60 298h1M75 298h1M105 298h1M493 298h1M523 298h1M538 298h1M583 298h1M15 299h91M493 299h91M15 300h1M60 300h1M75 300h1M105 300h1M493 300h1M523 300h1M538 300h1M583 300h1M15 301h1M60 301h1M75 301h1M105 301h1M493 301h1M523 301h1M538 301h1M583 301h1M15 302h1M60 302h1M75 302h1M105 302h1M493 302h1M523 302h1M538 302h1M583 302h1M15 303h1M60 303h1M75 303h1M105 303h1M493 303h1M523 303h1M538 303h1M583 303h1M15 304h1M60 304h1M75 304h1M105 304h1M493 304h1M523 304h1M538 304h1M583 304h1M15 305h1M60 305h1M75 305h1M105 305h1M131 305h13M493 305h1M523 305h1M538 305h1M583 305h1M15 306h1M60 306h1M75 306h1M105 306h1M493 306h1M523 306h1M538 306h1M583 306h1M15 307h1M60 307h1M75 307h1M105 307h1M493 307h1M523 307h1M538 307h1M583 307h1M15 308h1M60 308h1M75 308h1M105 308h1M493 308h1M523 308h1M538 308h1M583 308h1M15 309h1M60 309h1M75 309h1M105 309h1M493 309h1M523 309h1M538 309h1M583 309h1M15 310h1M60 310h1M76 310h1M105 310h1M493 310h1M522 310h1M538 310h1M583 310h1M15 311h1M61 311h1M76 311h1M105 311h1M493 311h1M522 311h1M537 311h1M583 311h1M15 312h1M61 312h1M76 312h1M105 312h1M493 312h1M522 312h1M537 312h1M583 312h1M16 313h1M61 313h1M76 313h1M105 313h1M493 313h1M522 313h1M537 313h1M582 313h1M16 314h1M61 314h1M76 314h1M105 314h1M493 314h1M522 314h1M537 314h1M582 314h1M16 315h1M61 315h1M76 315h1M105 315h1M493 315h1M522 315h1M537 315h1M582 315h1M16 316h1M61 316h1M76 316h1M106 316h1M492 316h1M522 316h1M537 316h1M582 316h1M16 317h1M61 317h1M76 317h1M106 317h1M492 317h1M522 317h1M537 317h1M582 317h1M16 318h1M61 318h1M68 318h9M106 318h1M492 318h1M522 318h8M537 318h1M582 318h1M16 319h1M61 319h7M76 319h1M106 319h1M492 319h1M522 319h1M530 319h8M582 319h1M16 320h1M61 320h1M76 320h1M106 320h1M492 320h1M522 320h1M537 320h1M582 320h1M16 321h1M61 321h1M76 321h1M106 321h1M492 321h1M522 321h1M537 321h1M582 321h1M16 322h1M61 322h1M76 322h1M106 322h1M463 322h3M492 322h1M522 322h1M537 322h1M582 322h1M17 323h1M61 323h1M76 323h1M107 323h1M459 323h4M491 323h1M522 323h1M537 323h1M581 323h1M17 324h1M61 324h1M76 324h1M107 324h1M455 324h4M491 324h1M522 324h1M537 324h1M581 324h1M17 325h1M61 325h1M76 325h1M107 325h1M452 325h3M491 325h1M522 325h1M537 325h1M581 325h1M17 326h1M61 326h1M77 326h1M107 326h1M491 326h1M521 326h1M537 326h1M581 326h1M17 327h1M61 327h1M77 327h1M107 327h1M452 327h1M491 327h1M521 327h1M537 327h1M581 327h1M17 328h1M62 328h1M77 328h1M107 328h1M453 328h1M491 328h1M521 328h1M536 328h1M581 328h1M17 329h1M62 329h1M77 329h1M108 329h1M454 329h1M490 329h1M521 329h1M536 329h1M581 329h1M17 330h1M62 330h1M77 330h1M108 330h1M455 330h1M490 330h1M521 330h1M536 330h1M581 330h1M17 331h1M62 331h1M77 331h1M108 331h1M455 331h1M490 331h1M521 331h1M536 331h1M581 331h1M17 332h1M62 332h1M77 332h1M108 332h1M456 332h1M490 332h1M521 332h1M536 332h1M581 332h1M18 333h1M62 333h1M77 333h1M108 333h1M457 333h1M490 333h1M521 333h1M536 333h1M580 333h1M18 334h1M63 334h1M78 334h1M108 334h1M458 334h1M490 334h1M520 334h1M535 334h1M580 334h1M18 335h1M63 335h1M78 335h1M108 335h1M459 335h1M490 335h1M520 335h1M535 335h1M580 335h1M18 336h1M63 336h1M78 336h1M109 336h1M460 336h1M489 336h1M520 336h1M535 336h1M580 336h1M18 337h1M63 337h1M78 337h1M109 337h1M460 337h1M489 337h1M520 337h1M535 337h1M580 337h1M18 338h1M64 338h1M75 338h4M109 338h1M461 338h1M489 338h1M520 338h4M534 338h1M580 338h1M18 339h1M64 339h1M68 339h7M79 339h1M109 339h1M462 339h1M489 339h1M519 339h1M524 339h7M534 339h1M580 339h1M18 340h1M64 340h4M79 340h1M109 340h1M489 340h1M519 340h1M531 340h4M580 340h1M18 341h1M64 341h1M79 341h1M110 341h1M488 341h1M519 341h1M534 341h1M580 341h1M18 342h1M64 342h1M79 342h1M110 342h1M488 342h1M519 342h1M534 342h1M580 342h1M19 343h1M64 343h1M80 343h1M110 343h1M488 343h1M518 343h1M534 343h1M579 343h1M19 344h1M65 344h1M80 344h1M110 344h1M488 344h1M518 344h1M533 344h1M579 344h1M19 345h1M65 345h1M80 345h1M111 345h1M487 345h1M518 345h1M533 345h1M579 345h1M19 346h1M65 346h1M80 346h1M111 346h1M487 346h1M518 346h1M533 346h1M579 346h1M19 347h1M65 347h1M81 347h1M111 347h1M487 347h1M517 347h1M533 347h1M579 347h1M19 348h1M65 348h1M81 348h1M112 348h1M486 348h1M517 348h1M533 348h1M579 348h1M19 349h1M65 349h1M81 349h1M112 349h1M486 349h1M517 349h1M533 349h1M579 349h1M19 350h1M66 350h1M81 350h1M112 350h1M486 350h1M517 350h1M532 350h1M579 350h1M20 351h1M66 351h1M82 351h1M113 351h1M485 351h1M516 351h1M532 351h1M578 351h1M20 352h1M66 352h1M82 352h1M113 352h1M485 352h1M516 352h1M532 352h1M578 352h1M20 353h1M66 353h1M82 353h1M113 353h1M485 353h1M516 353h1M532 353h1M578 353h1M20 354h1M67 354h1M82 354h1M114 354h1M484 354h1M516 354h1M531 354h1M578 354h1M20 355h1M67 355h1M83 355h1M114 355h1M484 355h1M515 355h1M531 355h1M578 355h1M21 356h1M67 356h1M83 356h1M114 356h1M484 356h1M515 356h1M531 356h1M577 356h1M21 357h1M67 357h1M80 357h4M114 357h1M484 357h1M515 357h4M531 357h1M577 357h1M21 358h1M67 358h1M76 358h4M83 358h1M115 358h1M483 358h1M515 358h1M519 358h4M531 358h1M577 358h1M21 359h1M68 359h1M72 359h4M84 359h1M115 359h1M483 359h1M514 359h1M523 359h4M530 359h1M577 359h1M21 360h1M68 360h4M84 360h1M115 360h1M483 360h1M514 360h1M527 360h4M577 360h1M22 361h1M68 361h1M84 361h1M116 361h1M482 361h1M514 361h1M530 361h1M576 361h1M22 362h1M68 362h1M85 362h1M116 362h1M482 362h1M513 362h1M530 362h1M576 362h1M22 363h1M69 363h1M85 363h1M116 363h1M482 363h1M513 363h1M529 363h1M576 363h1M22 364h1M69 364h1M85 364h1M117 364h1M481 364h1M513 364h1M529 364h1M576 364h1M23 365h1M69 365h1M85 365h1M117 365h1M481 365h1M513 365h1M529 365h1M575 365h1M23 366h1M69 366h1M86 366h1M117 366h1M481 366h1M512 366h1M529 366h1M575 366h1M23 367h1M70 367h1M86 367h1M118 367h1M480 367h1M512 367h1M528 367h1M575 367h1M23 368h1M70 368h1M86 368h1M118 368h1M480 368h1M512 368h1M528 368h1M575 368h1M24 369h1M71 369h1M86 369h1M118 369h1M480 369h1M512 369h1M527 369h1M574 369h1M24 370h1M71 370h1M87 370h1M119 370h1M479 370h1M511 370h1M527 370h1M574 370h1M24 371h1M71 371h1M87 371h1M119 371h1M479 371h1M511 371h1M527 371h1M574 371h1M25 372h1M72 372h1M88 372h1M119 372h1M479 372h1M510 372h1M526 372h1M573 372h1M25 373h1M72 373h1M88 373h1M120 373h1M478 373h1M510 373h1M526 373h1M573 373h1M25 374h1M72 374h1M89 374h1M120 374h1M478 374h1M509 374h1M526 374h1M573 374h1M25 375h1M73 375h1M89 375h1M121 375h1M477 375h1M509 375h1M525 375h1M573 375h1M26 376h1M73 376h1M87 376h3M121 376h1M477 376h1M509 376h3M525 376h1M572 376h1M26 377h1M73 377h1M84 377h3M90 377h1M122 377h1M476 377h1M508 377h1M512 377h3M525 377h1M572 377h1M26 378h1M73 378h1M80 378h4M90 378h1M122 378h1M476 378h1M508 378h1M515 378h4M525 378h1M572 378h1M27 379h1M74 379h1M77 379h3M90 379h1M123 379h1M475 379h1M508 379h1M519 379h3M524 379h1M571 379h1M27 380h1M74 380h3M90 380h1M123 380h1M475 380h1M508 380h1M522 380h3M571 380h1M27 381h1M74 381h1M91 381h1M124 381h1M474 381h1M507 381h1M524 381h1M571 381h1M28 382h1M75 382h1M91 382h1M124 382h1M474 382h1M507 382h1M523 382h1M570 382h1M28 383h1M75 383h1M91 383h1M125 383h1M473 383h1M507 383h1M523 383h1M570 383h1M28 384h1M76 384h1M91 384h1M125 384h1M473 384h1M507 384h1M522 384h1M570 384h1M29 385h1M76 385h1M92 385h1M126 385h1M472 385h1M506 385h1M522 385h1M569 385h1M29 386h1M76 386h1M92 386h1M126 386h1M472 386h1M506 386h1M522 386h1M569 386h1M29 387h1M77 387h1M93 387h1M127 387h1M471 387h1M505 387h1M521 387h1M569 387h1M30 388h1M77 388h1M93 388h1M127 388h1M471 388h1M505 388h1M521 388h1M568 388h1M30 389h1M78 389h1M94 389h1M128 389h1M470 389h1M504 389h1M520 389h1M568 389h1M30 390h1M78 390h1M94 390h1M128 390h1M470 390h1M504 390h1M520 390h1M568 390h1M31 391h1M79 391h1M95 391h1M129 391h1M469 391h1M503 391h1M519 391h1M567 391h1M31 392h1M79 392h1M95 392h1M129 392h1M469 392h1M503 392h1M519 392h1M567 392h1M31 393h1M80 393h1M96 393h1M130 393h1M468 393h1M502 393h1M518 393h1M567 393h1M31 394h1M80 394h1M94 394h3M130 394h1M468 394h1M502 394h3M518 394h1M567 394h1M32 395h1M81 395h1M92 395h2M97 395h1M131 395h1M467 395h1M501 395h1M505 395h2M517 395h1M566 395h1M32 396h1M81 396h1M89 396h3M97 396h1M130 396h1M421 396h1M468 396h1M501 396h1M507 396h2M517 396h1M566 396h1M32 397h1M81 397h1M87 397h2M98 397h1M128 397h2M132 397h1M422 397h1M466 397h1M469 397h2M500 397h1M509 397h3M517 397h1M566 397h1M33 398h1M82 398h1M85 398h2M98 398h1M126 398h2M132 398h1M423 398h2M466 398h1M471 398h2M500 398h1M512 398h2M516 398h1M565 398h1M33 399h1M82 399h3M99 399h1M125 399h1M133 399h1M425 399h1M465 399h1M473 399h1M499 399h1M514 399h3M565 399h1M34 400h1M83 400h1M99 400h1M123 400h2M134 400h1M426 400h1M464 400h1M474 400h2M499 400h1M515 400h1M564 400h1M34 401h1M83 401h1M100 401h1M121 401h2M134 401h1M427 401h2M464 401h1M476 401h2M498 401h1M515 401h1M564 401h1M35 402h1M84 402h1M100 402h1M120 402h1M135 402h1M429 402h1M463 402h1M478 402h1M498 402h1M514 402h1M563 402h1M35 403h1M84 403h1M101 403h1M118 403h2M136 403h1M430 403h1M462 403h1M479 403h2M497 403h1M514 403h1M563 403h1M36 404h1M85 404h1M101 404h1M116 404h2M136 404h1M462 404h1M481 404h2M497 404h1M513 404h1M562 404h1M36 405h1M85 405h1M102 405h1M115 405h1M137 405h1M461 405h1M483 405h1M496 405h1M513 405h1M562 405h1M36 406h1M86 406h1M102 406h1M113 406h2M137 406h1M461 406h1M484 406h2M496 406h1M512 406h1M562 406h1M37 407h1M86 407h1M103 407h1M111 407h2M138 407h1M460 407h1M486 407h2M495 407h1M512 407h1M561 407h1M37 408h1M87 408h1M103 408h1M110 408h1M139 408h1M459 408h1M488 408h1M495 408h1M511 408h1M561 408h1M38 409h1M87 409h1M104 409h1M108 409h2M139 409h1M459 409h1M489 409h2M494 409h1M511 409h1M560 409h1M38 410h1M88 410h1M104 410h1M106 410h2M140 410h1M458 410h1M491 410h2M494 410h1M510 410h1M560 410h1M39 411h1M88 411h1M104 411h2M141 411h1M457 411h1M493 411h2M510 411h1M559 411h1M39 412h1M89 412h1M102 412h2M106 412h1M141 412h1M457 412h1M492 412h1M495 412h2M509 412h1M559 412h1M40 413h1M89 413h1M101 413h1M106 413h1M142 413h1M456 413h1M492 413h1M497 413h1M509 413h1M558 413h1M40 414h1M90 414h1M99 414h2M107 414h1M143 414h1M455 414h1M491 414h1M498 414h2M508 414h1M558 414h1M40 415h1M90 415h1M97 415h2M108 415h1M144 415h1M454 415h1M490 415h1M500 415h2M508 415h1M558 415h1M41 416h1M91 416h1M96 416h1M108 416h1M144 416h1M401 416h1M454 416h1M490 416h1M502 416h1M507 416h1M557 416h1M41 417h1M91 417h1M94 417h2M109 417h1M145 417h1M402 417h1M453 417h1M489 417h1M503 417h2M507 417h1M557 417h1M42 418h1M92 418h2M110 418h1M146 418h1M403 418h1M452 418h1M488 418h1M505 418h2M556 418h1M42 419h1M91 419h1M93 419h1M110 419h1M147 419h1M404 419h1M451 419h1M488 419h1M505 419h1M507 419h1M556 419h1M43 420h1M89 420h2M93 420h1M111 420h1M148 420h1M405 420h1M450 420h1M487 420h1M505 420h1M508 420h2M555 420h1M43 421h1M87 421h2M94 421h1M111 421h1M149 421h1M405 421h1M449 421h1M487 421h1M504 421h1M510 421h2M555 421h1M44 422h1M85 422h2M94 422h1M112 422h1M149 422h1M406 422h1M449 422h1M486 422h1M504 422h1M512 422h2M554 422h1M44 423h1M84 423h1M95 423h1M112 423h1M150 423h1M407 423h1M448 423h1M486 423h1M503 423h1M514 423h1M554 423h1M44 424h1M82 424h2M95 424h1M113 424h1M151 424h1M408 424h1M447 424h1M485 424h1M503 424h1M515 424h2M554 424h1M45 425h1M80 425h2M96 425h1M114 425h1M152 425h1M409 425h1M446 425h1M484 425h1M502 425h1M517 425h2M553 425h1M45 426h1M78 426h2M97 426h1M115 426h1M153 426h1M445 426h1M483 426h1M501 426h1M519 426h2M553 426h1M46 427h1M77 427h1M97 427h1M116 427h1M153 427h1M445 427h1M482 427h1M501 427h1M521 427h1M552 427h1M46 428h1M75 428h2M98 428h1M115 428h2M154 428h1M444 428h1M482 428h2M500 428h1M522 428h2M552 428h1M47 429h1M73 429h2M99 429h1M113 429h2M117 429h1M155 429h1M443 429h1M481 429h1M484 429h2M499 429h1M524 429h2M551 429h1M47 430h1M71 430h2M100 430h1M112 430h1M118 430h1M156 430h1M442 430h1M480 430h1M486 430h1M498 430h1M526 430h2M551 430h1M48 431h1M69 431h2M100 431h1M111 431h1M119 431h1M157 431h1M441 431h1M479 431h1M487 431h1M498 431h1M528 431h2M550 431h1M48 432h1M68 432h1M101 432h1M109 432h2M119 432h1M158 432h1M440 432h1M479 432h1M488 432h2M497 432h1M530 432h1M550 432h1M49 433h1M66 433h2M102 433h1M108 433h1M120 433h1M159 433h1M439 433h1M478 433h1M490 433h1M496 433h1M531 433h2M549 433h1M49 434h1M64 434h2M102 434h1M107 434h1M121 434h1M160 434h1M438 434h1M477 434h1M491 434h1M496 434h1M533 434h2M549 434h1M50 435h1M62 435h2M103 435h1M105 435h2M122 435h1M161 435h1M437 435h1M476 435h1M492 435h2M495 435h1M535 435h2M548 435h1M50 436h1M61 436h1M104 436h1M122 436h1M162 436h1M373 436h1M436 436h1M476 436h1M494 436h1M537 436h1M548 436h1M51 437h1M59 437h2M105 437h1M123 437h1M163 437h1M374 437h1M435 437h1M475 437h1M493 437h1M538 437h2M547 437h1M51 438h1M57 438h2M105 438h1M124 438h1M164 438h1M374 438h1M434 438h1M474 438h1M493 438h1M540 438h2M547 438h1M52 439h1M55 439h2M106 439h1M125 439h1M165 439h1M375 439h1M433 439h1M473 439h1M492 439h1M542 439h2M546 439h1M52 440h1M54 440h1M107 440h1M126 440h1M166 440h1M375 440h1M432 440h1M472 440h1M491 440h1M544 440h1M546 440h1M53 441h1M107 441h1M126 441h1M167 441h1M376 441h1M431 441h1M472 441h1M491 441h1M545 441h1M54 442h1M108 442h1M127 442h1M168 442h1M377 442h1M430 442h1M471 442h1M490 442h1M544 442h1M54 443h1M109 443h1M127 443h2M169 443h1M377 443h1M429 443h1M470 443h2M489 443h1M544 443h1M55 444h1M110 444h1M126 444h1M129 444h1M170 444h1M378 444h1M428 444h1M469 444h1M472 444h1M488 444h1M543 444h1M56 445h1M110 445h1M124 445h2M130 445h1M171 445h2M378 445h1M426 445h2M468 445h1M473 445h2M488 445h1M542 445h1M56 446h1M111 446h1M123 446h1M131 446h1M173 446h1M379 446h1M425 446h1M467 446h1M475 446h1M487 446h1M542 446h1M57 447h1M112 447h1M122 447h1M131 447h1M174 447h1M346 447h1M424 447h1M467 447h1M476 447h1M486 447h1M541 447h1M57 448h1M113 448h1M121 448h1M132 448h1M175 448h1M346 448h1M423 448h1M466 448h1M477 448h1M485 448h1M541 448h1M58 449h1M114 449h1M120 449h1M133 449h1M176 449h1M347 449h1M421 449h2M465 449h1M478 449h1M484 449h1M540 449h1M59 450h1M114 450h1M118 450h2M134 450h1M177 450h2M347 450h1M420 450h1M464 450h1M479 450h2M484 450h1M539 450h1M59 451h1M115 451h1M117 451h1M135 451h1M179 451h1M347 451h1M419 451h1M463 451h1M481 451h1M483 451h1M539 451h1M60 452h1M116 452h1M136 452h1M180 452h1M347 452h1M418 452h1M462 452h1M482 452h1M538 452h1M61 453h1M117 453h1M137 453h1M181 453h1M348 453h1M417 453h1M461 453h1M481 453h1M537 453h1M61 454h1M118 454h1M138 454h1M182 454h2M348 454h1M415 454h2M460 454h1M480 454h1M537 454h1M62 455h1M119 455h1M139 455h1M184 455h1M348 455h1M414 455h1M459 455h1M479 455h1M536 455h1M63 456h1M119 456h1M140 456h1M185 456h1M348 456h1M413 456h1M458 456h1M479 456h1M535 456h1M63 457h1M120 457h1M141 457h1M186 457h2M349 457h1M411 457h2M457 457h1M478 457h1M535 457h1M64 458h1M121 458h1M140 458h1M142 458h1M188 458h1M349 458h1M410 458h1M456 458h1M458 458h1M477 458h1M534 458h1M65 459h1M122 459h1M139 459h1M143 459h1M189 459h2M349 459h1M408 459h2M455 459h1M459 459h1M476 459h1M533 459h1M65 460h1M123 460h1M138 460h1M144 460h1M191 460h1M407 460h1M454 460h1M460 460h1M475 460h1M533 460h1M66 461h1M124 461h1M137 461h1M145 461h1M192 461h2M405 461h2M453 461h1M461 461h1M474 461h1M532 461h1M67 462h1M125 462h1M136 462h1M146 462h1M194 462h2M403 462h2M452 462h1M462 462h1M473 462h1M531 462h1M67 463h1M125 463h1M135 463h1M147 463h1M196 463h1M402 463h1M451 463h1M463 463h1M473 463h1M531 463h1M68 464h1M126 464h1M134 464h1M148 464h1M197 464h2M400 464h2M450 464h1M464 464h1M472 464h1M530 464h1M68 465h1M127 465h1M133 465h1M149 465h1M199 465h1M399 465h1M449 465h1M465 465h1M471 465h1M530 465h1M69 466h1M128 466h1M132 466h1M150 466h1M200 466h2M397 466h2M448 466h1M466 466h1M470 466h1M529 466h1M70 467h1M129 467h1M131 467h1M151 467h1M395 467h1M446 467h2M467 467h1M469 467h1M528 467h1M71 468h1M130 468h1M152 468h2M202 468h3M393 468h2M396 468h1M445 468h1M468 468h1M527 468h1M71 469h1M131 469h1M154 469h1M201 469h1M205 469h2M391 469h2M397 469h1M444 469h1M467 469h1M527 469h1M72 470h1M132 470h1M155 470h1M201 470h1M207 470h2M389 470h2M397 470h1M443 470h1M466 470h1M526 470h1M73 471h1M133 471h1M155 471h2M200 471h1M209 471h2M387 471h2M398 471h1M442 471h2M465 471h1M525 471h1M74 472h1M134 472h1M154 472h1M157 472h1M200 472h1M211 472h2M385 472h2M398 472h1M440 472h2M444 472h1M464 472h1M524 472h1M74 473h1M135 473h1M153 473h1M158 473h2M199 473h1M213 473h2M383 473h2M399 473h1M439 473h1M445 473h1M462 473h2M524 473h1M75 474h1M136 474h2M153 474h1M160 474h1M198 474h1M215 474h2M381 474h2M400 474h1M438 474h1M445 474h1M461 474h1M523 474h1M76 475h1M138 475h1M152 475h1M161 475h1M198 475h1M217 475h2M379 475h2M400 475h1M437 475h1M446 475h1M460 475h1M522 475h1M77 476h1M139 476h1M151 476h1M162 476h2M197 476h1M219 476h3M377 476h2M401 476h1M435 476h2M447 476h1M459 476h1M521 476h1M78 477h1M140 477h1M150 477h1M164 477h1M197 477h1M222 477h2M375 477h2M401 477h1M434 477h1M448 477h1M458 477h1M520 477h1M79 478h1M141 478h1M149 478h1M165 478h1M196 478h1M224 478h2M373 478h2M402 478h1M433 478h1M449 478h1M457 478h1M519 478h1M80 479h1M142 479h2M148 479h1M166 479h2M195 479h1M226 479h3M370 479h3M403 479h1M431 479h2M450 479h1M455 479h2M518 479h1M81 480h1M144 480h1M148 480h1M168 480h1M195 480h1M229 480h3M367 480h3M403 480h1M430 480h1M450 480h1M454 480h1M517 480h1M82 481h1M145 481h1M147 481h1M169 481h1M194 481h1M232 481h3M364 481h3M404 481h1M429 481h1M451 481h1M453 481h1M516 481h1M83 482h1M146 482h1M170 482h1M194 482h1M235 482h3M361 482h3M404 482h1M427 482h2M452 482h1M515 482h1M84 483h1M147 483h1M170 483h3M193 483h1M238 483h3M358 483h3M405 483h1M426 483h1M428 483h1M451 483h1M514 483h1M84 484h1M148 484h1M169 484h1M173 484h1M192 484h1M241 484h4M354 484h4M406 484h1M425 484h1M429 484h1M449 484h2M514 484h1M85 485h1M149 485h2M169 485h1M174 485h1M192 485h1M245 485h3M351 485h3M406 485h1M424 485h1M429 485h1M448 485h1M513 485h1M86 486h1M151 486h1M168 486h1M175 486h2M191 486h1M248 486h3M348 486h3M407 486h1M422 486h2M430 486h1M447 486h1M512 486h1M87 487h1M152 487h1M167 487h1M177 487h2M191 487h1M251 487h3M345 487h3M407 487h1M420 487h2M431 487h1M446 487h1M511 487h1M87 488h1M153 488h2M166 488h1M179 488h2M190 488h1M254 488h4M341 488h4M408 488h1M418 488h2M432 488h1M444 488h2M511 488h1M88 489h1M155 489h1M166 489h1M181 489h1M189 489h1M258 489h5M336 489h5M409 489h1M417 489h1M432 489h1M443 489h1M510 489h1M89 490h1M156 490h1M165 490h1M182 490h2M189 490h1M263 490h6M329 490h7M409 490h1M415 490h2M433 490h1M442 490h1M509 490h1M90 491h1M157 491h2M164 491h1M184 491h1M188 491h1M269 491h7M323 491h6M410 491h1M414 491h1M434 491h1M440 491h2M508 491h1M91 492h1M159 492h1M163 492h1M185 492h2M188 492h1M276 492h7M316 492h7M410 492h1M412 492h2M435 492h1M439 492h1M507 492h1M92 493h1M160 493h2M163 493h1M187 493h1M283 493h33M411 493h1M435 493h1M437 493h2M506 493h1M93 494h1M162 494h1M187 494h3M299 494h1M409 494h3M436 494h1M505 494h1M94 495h1M163 495h1M186 495h1M190 495h2M299 495h1M407 495h2M412 495h1M435 495h1M504 495h1M95 496h1M164 496h2M186 496h1M192 496h2M299 496h1M405 496h2M412 496h1M433 496h2M503 496h1M96 497h1M166 497h1M185 497h1M194 497h2M299 497h1M403 497h2M413 497h1M432 497h1M502 497h1M97 498h1M167 498h2M184 498h1M196 498h2M299 498h1M401 498h2M414 498h1M430 498h2M501 498h1M98 499h1M169 499h1M184 499h1M198 499h2M299 499h1M399 499h2M414 499h1M429 499h1M500 499h1M99 500h1M170 500h1M183 500h1M200 500h2M299 500h1M397 500h2M415 500h1M428 500h1M499 500h1M100 501h1M171 501h2M183 501h1M202 501h2M299 501h1M395 501h2M415 501h1M426 501h2M498 501h1M101 502h1M173 502h1M182 502h1M204 502h2M299 502h1M393 502h2M416 502h1M425 502h1M497 502h1M102 503h1M174 503h2M181 503h1M204 503h1M206 503h2M299 503h1M391 503h2M394 503h1M417 503h1M423 503h2M496 503h1M103 504h1M176 504h2M181 504h1M204 504h1M208 504h2M299 504h1M389 504h2M394 504h1M417 504h1M421 504h2M495 504h1M104 505h1M178 505h3M203 505h1M210 505h2M299 505h1M387 505h2M395 505h1M418 505h3M494 505h1M105 506h1M180 506h1M203 506h1M212 506h2M299 506h1M385 506h2M395 506h1M418 506h1M493 506h1M106 507h1M179 507h1M181 507h2M202 507h1M214 507h3M299 507h1M381 507h4M396 507h1M416 507h2M419 507h1M492 507h1M107 508h1M178 508h1M183 508h2M202 508h1M217 508h4M299 508h1M377 508h4M396 508h1M414 508h2M420 508h1M491 508h1M108 509h1M178 509h1M185 509h2M201 509h1M221 509h4M299 509h1M374 509h3M397 509h1M412 509h2M420 509h1M490 509h1M109 510h1M177 510h1M187 510h1M201 510h1M222 510h1M225 510h2M299 510h1M372 510h2M376 510h1M397 510h1M410 510h2M421 510h1M489 510h1M110 511h1M177 511h1M188 511h2M201 511h1M222 511h1M227 511h2M299 511h1M370 511h2M376 511h1M397 511h1M408 511h2M421 511h1M487 511h2M111 512h2M176 512h1M190 512h2M200 512h1M221 512h1M229 512h3M299 512h1M366 512h4M377 512h1M398 512h1M406 512h2M422 512h1M486 512h1M113 513h1M176 513h1M192 513h2M200 513h1M221 513h1M232 513h4M299 513h1M362 513h4M377 513h1M398 513h1M404 513h2M422 513h1M485 513h1M114 514h1M175 514h1M194 514h3M199 514h1M221 514h1M236 514h4M299 514h1M359 514h3M377 514h1M399 514h1M402 514h2M423 514h1M483 514h2M115 515h2M174 515h1M197 515h3M220 515h1M240 515h4M299 515h1M355 515h4M378 515h1M399 515h3M424 515h1M482 515h1M117 516h1M174 516h1M199 516h2M220 516h1M241 516h1M244 516h3M299 516h1M351 516h4M357 516h1M378 516h1M398 516h2M424 516h1M481 516h1M118 517h1M173 517h1M201 517h2M220 517h1M241 517h1M247 517h4M299 517h1M347 517h4M357 517h1M378 517h1M395 517h3M425 517h1M480 517h1M119 518h1M173 518h1M203 518h2M220 518h1M241 518h1M251 518h4M299 518h1M343 518h4M357 518h1M378 518h1M393 518h2M425 518h1M479 518h1M120 519h1M172 519h1M205 519h2M219 519h1M240 519h1M255 519h4M299 519h1M339 519h4M358 519h1M379 519h1M391 519h2M426 519h1M478 519h1M121 520h1M172 520h1M207 520h2M219 520h1M240 520h1M259 520h6M299 520h1M334 520h5M358 520h1M379 520h1M389 520h2M426 520h1M477 520h1M122 521h1M171 521h1M209 521h3M219 521h1M240 521h1M260 521h1M265 521h7M299 521h1M326 521h8M338 521h1M358 521h1M379 521h1M387 521h2M427 521h1M476 521h1M123 522h1M170 522h1M212 522h2M218 522h1M240 522h1M260 522h1M272 522h16M299 522h1M310 522h16M338 522h1M358 522h1M380 522h1M384 522h3M428 522h1M475 522h1M124 523h1M170 523h1M214 523h3M218 523h1M239 523h1M260 523h1M280 523h1M288 523h22M318 523h1M338 523h1M359 523h1M380 523h1M382 523h2M428 523h1M474 523h1M125 524h1M169 524h1M217 524h3M239 524h1M259 524h1M280 524h1M299 524h1M318 524h1M339 524h1M359 524h1M379 524h3M429 524h1M472 524h2M126 525h2M169 525h1M220 525h4M239 525h1M259 525h1M280 525h1M299 525h1M318 525h1M339 525h1M359 525h1M375 525h4M429 525h1M471 525h1M128 526h1M168 526h1M224 526h3M239 526h1M259 526h1M280 526h1M299 526h1M318 526h1M339 526h1M359 526h1M372 526h3M430 526h1M470 526h1M129 527h1M168 527h1M227 527h2M238 527h1M259 527h1M280 527h1M299 527h1M318 527h1M339 527h1M360 527h1M369 527h3M430 527h1M468 527h2M130 528h2M167 528h1M229 528h3M238 528h1M259 528h1M280 528h1M299 528h1M318 528h1M339 528h1M360 528h1M367 528h2M431 528h1M467 528h1M132 529h1M167 529h1M232 529h4M238 529h1M259 529h1M280 529h1M299 529h1M318 529h1M339 529h1M360 529h1M363 529h4M431 529h1M466 529h1M133 530h2M166 530h1M236 530h4M259 530h1M279 530h1M299 530h1M319 530h1M339 530h1M359 530h4M432 530h1M464 530h2M135 531h1M165 531h1M240 531h4M258 531h1M279 531h1M299 531h1M319 531h1M340 531h1M354 531h5M433 531h1M462 531h2M136 532h2M165 532h1M244 532h4M258 532h1M279 532h1M299 532h1M319 532h1M340 532h1M350 532h4M433 532h1M461 532h1M138 533h2M164 533h1M248 533h6M258 533h1M279 533h1M299 533h1M319 533h1M340 533h1M344 533h6M434 533h1M459 533h2M140 534h1M164 534h1M254 534h6M279 534h1M299 534h1M319 534h1M338 534h6M434 534h1M458 534h1M141 535h2M163 535h1M260 535h4M279 535h1M299 535h1M319 535h1M334 535h4M435 535h1M456 535h2M143 536h1M163 536h1M264 536h6M279 536h1M299 536h1M319 536h1M328 536h6M435 536h1M455 536h1M144 537h2M162 537h1M270 537h17M299 537h1M311 537h17M436 537h1M453 537h2M146 538h1M161 538h1M287 538h24M437 538h1M452 538h1M147 539h2M161 539h1M299 539h1M437 539h1M450 539h2M149 540h1M160 540h1M299 540h1M438 540h1M449 540h1M150 541h2M160 541h1M299 541h1M438 541h1M447 541h2M152 542h1M159 542h1M299 542h1M439 542h1M445 542h2M153 543h2M159 543h1M299 543h1M439 543h1M444 543h1M155 544h2M158 544h1M299 544h1M440 544h1M442 544h2M157 545h1M299 545h1M441 545h1M158 546h2M299 546h1M439 546h2M160 547h2M299 547h1M437 547h2M162 548h2M299 548h1M435 548h2M164 549h2M299 549h1M433 549h2M166 550h2M299 550h1M431 550h2M168 551h2M299 551h1M429 551h2M170 552h2M299 552h1M427 552h2M172 553h2M299 553h1M425 553h2M174 554h3M299 554h1M422 554h3M177 555h2M299 555h1M420 555h2M179 556h2M299 556h1M418 556h2M181 557h2M299 557h1M416 557h2M183 558h3M299 558h1M413 558h3M186 559h2M299 559h1M411 559h2M188 560h2M299 560h1M409 560h2M190 561h2M299 561h1M407 561h2M192 562h3M299 562h1M404 562h3M195 563h2M299 563h1M402 563h2M197 564h2M299 564h1M400 564h2M199 565h2M299 565h1M398 565h2M201 566h3M299 566h1M395 566h3M204 567h3M299 567h1M391 567h4M207 568h4M299 568h1M388 568h3M211 569h3M299 569h1M385 569h3M214 570h3M299 570h1M382 570h3M217 571h3M299 571h1M379 571h3M220 572h3M299 572h1M376 572h3M223 573h3M299 573h1M372 573h4M226 574h4M299 574h1M369 574h3M230 575h4M299 575h1M365 575h4M234 576h4M299 576h1M361 576h4M238 577h5M299 577h1M356 577h5M243 578h5M299 578h1M351 578h5M248 579h7M299 579h1M343 579h8M255 580h10M299 580h1M333 580h10M265 581h10M299 581h1M323 581h10M275 582h10M299 582h1M313 582h10M285 583h28"/>
</svg>
<div class="t">
<span class="white" style="left:605.5px;top:7px">Astrolog 5.40</span>
<span class="ltgray" style="left:605.5px;top:17px">"Anonymous"</span>
<span class="ltgray" style="left:605.5px;top:27px">Fri August 12, 1977</span>
<span class="ltgray" style="left:605.5px;top:37px"> 7:35pm (ST +8:00 GMT)</span>
<span class="ltgray" style="left:605.5px;top:47px">"Taiwan"</span>
<span class="ltgray" style="left:605.5px;top:57px">114°09E 22°17N</span>
<span class="ltgray" style="left:605.5px;top:67px">Whole houses.</span>
<span class="ltgray" style="left:605.5px;top:77px">Tropical, Geocentric.</span>
<span class="ltgray" style="left:605.5px;top:87px">Julian Day = 2443367.9826</span>
<span class="red" style="left:605.5px;top:107px"> 1st house:</span>
<span class="blue" style="left:683.5px;top:107px">0Pis00</span>
<span class="yellow" style="left:605.5px;top:117px"> 2nd house:</span>
<span class="red" style="left:683.5px;top:117px">0Ari00</span>
<span class="green" style="left:605.5px;top:127px"> 3rd house:</span>
<span class="yellow" style="left:683.5px;top:127px">0Tau00</span>
<span class="blue" style="left:605.5px;top:137px"> 4th house:</span>
<span class="green" style="left:683.5px;top:137px">0Gem00</span>
<span class="red" style="left:605.5px;top:147px"> 5th house:</span>
<span class="blue" style="left:683.5px;top:147px">0Can00</span>
<span class="yellow" style="left:605.5px;top:157px"> 6th house:</span>
<span class="red" style="left:683.5px;top:157px">0Leo00</span>
<span class="green" style="left:605.5px;top:167px"> 7th house:</span>
<span class="yellow" style="left:683.5px;top:167px">0Vir00</span>
<span class="blue" style="left:605.5px;top:177px"> 8th house:</span>
<span class="green" style="left:683.5px;top:177px">0Lib00</span>
<span class="red" style="left:605.5px;top:187px"> 9th house:</span>
<span class="blue" style="left:683.5px;top:187px">0Sco00</span>
<span class="yellow" style="left:605.5px;top:197px">10th house:</span>
<span class="red" style="left:683.5px;top:197px">0Sag00</span>
<span class="green" style="left:605.5px;top:207px">11th house:</span>
<span class="yellow" style="left:683.5px;top:207px">0Cap00</span>
<span class="blue" style="left:605.5px;top:217px">12th house:</span>
<span class="green" style="left:683.5px;top:217px">0Aqu00</span>
<span class="red" style="left:605.5px;top:237px"> Sun:</span>
<span class="red" style="left:641.5px;top:237px">19Leo38</span>
<span class="ltgray" style="left:695.5px;top:237px">- 0°00'</span>
<span class="blue" style="left:605.5px;top:247px">Moon:</span>
<span class="blue" style="left:641.5px;top:247px">21Can32</span>
<span class="ltgray" style="left:695.5px;top:247px">- 5°04'</span>
<span class="green" style="left:605.5px;top:257px">Merc:</span>
<span class="yellow" style="left:641.5px;top:257px">16Vir37</span>
<span class="ltgray" style="left:695.5px;top:257px">- 2°20'</span>
<span class="green" style="left:605.5px;top:267px">Venu:</span>
<span class="blue" style="left:641.5px;top:267px">11Can06</span>
<span class="ltgray" style="left:695.5px;top:267px">- 1°16'</span>
<span class="red" style="left:605.5px;top:277px">Mars:</span>
<span class="green" style="left:641.5px;top:277px">17Gem32</span>
<span class="ltgray" style="left:695.5px;top:277px">- 0°17'</span>
<span class="red" style="left:605.5px;top:287px">Jupi:</span>
<span class="green" style="left:641.5px;top:287px">28Gem34</span>
<span class="ltgray" style="left:695.5px;top:287px">- 0°25'</span>
<span class="yellow" style="left:605.5px;top:297px">Satu:</span>
<span class="red" style="left:641.5px;top:297px">20Leo18</span>
<span class="ltgray" style="left:695.5px;top:297px">+ 1°01'</span>
<span class="green" style="left:605.5px;top:307px">Uran:</span>
<span class="blue" style="left:641.5px;top:307px"> 8Sco00</span>
<span class="ltgray" style="left:695.5px;top:307px">+ 0°25'</span>
<span class="blue" style="left:605.5px;top:317px">Nept:</span>
<span class="red" style="left:641.5px;top:317px">13Sag25</span>
<span class="white" style="left:683.5px;top:317px">R</span>
<span class="ltgray" style="left:695.5px;top:317px">+ 1°30'</span>
<span class="blue" style="left:605.5px;top:327px">Plut:</span>
<span class="green" style="left:641.5px;top:327px">12Lib08</span>
<span class="ltgray" style="left:695.5px;top:327px">+16°43'</span>
<span class="dkcyan" style="left:605.5px;top:337px">Node:</span>
<span class="green" style="left:641.5px;top:337px">18Lib03</span>
<span class="white" style="left:683.5px;top:337px">R</span>
<span class="ltgray" style="left:695.5px;top:337px">+ 0°00'</span>
<span class="ltgray" style="left:605.5px;top:357px">Fire: 4, Earth: 1,</span>
<span class="ltgray" style="left:605.5px;top:367px">Air : 4, Water: 4</span>
<span class="ltgray" style="left:605.5px;top:377px">Car: 4, Fix: 3, Mut: 6</span>
<span class="ltgray" style="left:605.5px;top:387px">Yang: 8, Yin: 5</span>
<span class="ltgray" style="left:605.5px;top:397px">M: 5, N: 6, A: 1, D: 10</span>
<span class="ltgray" style="left:605.5px;top:407px">Ang: 4, Suc: 4, Cad: 3</span>
<span class="ltgray" style="left:605.5px;top:417px">Learn: 7, Share: 6</span>
</div>
<span class="hn red" style="left:97.2px;top:348px">1</span>
<span class="hn yellow" style="left:152.2px;top:442px">2</span>
<span class="hn green" style="left:246.2px;top:497px">3</span>
<span class="hn blue" style="left:354.2px;top:497px">4</span>
<span class="hn red" style="left:448.2px;top:442px">5</span>
<span class="hn yellow" style="left:503.2px;top:348px">6</span>
<span class="hn green" style="left:503.2px;top:240px">7</span>
<span class="hn blue" style="left:448.2px;top:146px">8</span>
<span class="hn red" style="left:354.2px;top:91px">9</span>
<span class="hn yellow" style="left:246.2px;top:91px">10</span>
<span class="hn green" style="left:152.2px;top:146px">11</span>
<span class="hn blue" style="left:97.2px;top:240px">12</span>
<span class="ob yellow" style="left:261px;top:111px">MC</span>
<span class="ob red" style="left:111px;top:295px">Asc</span>
</div></body></html>
